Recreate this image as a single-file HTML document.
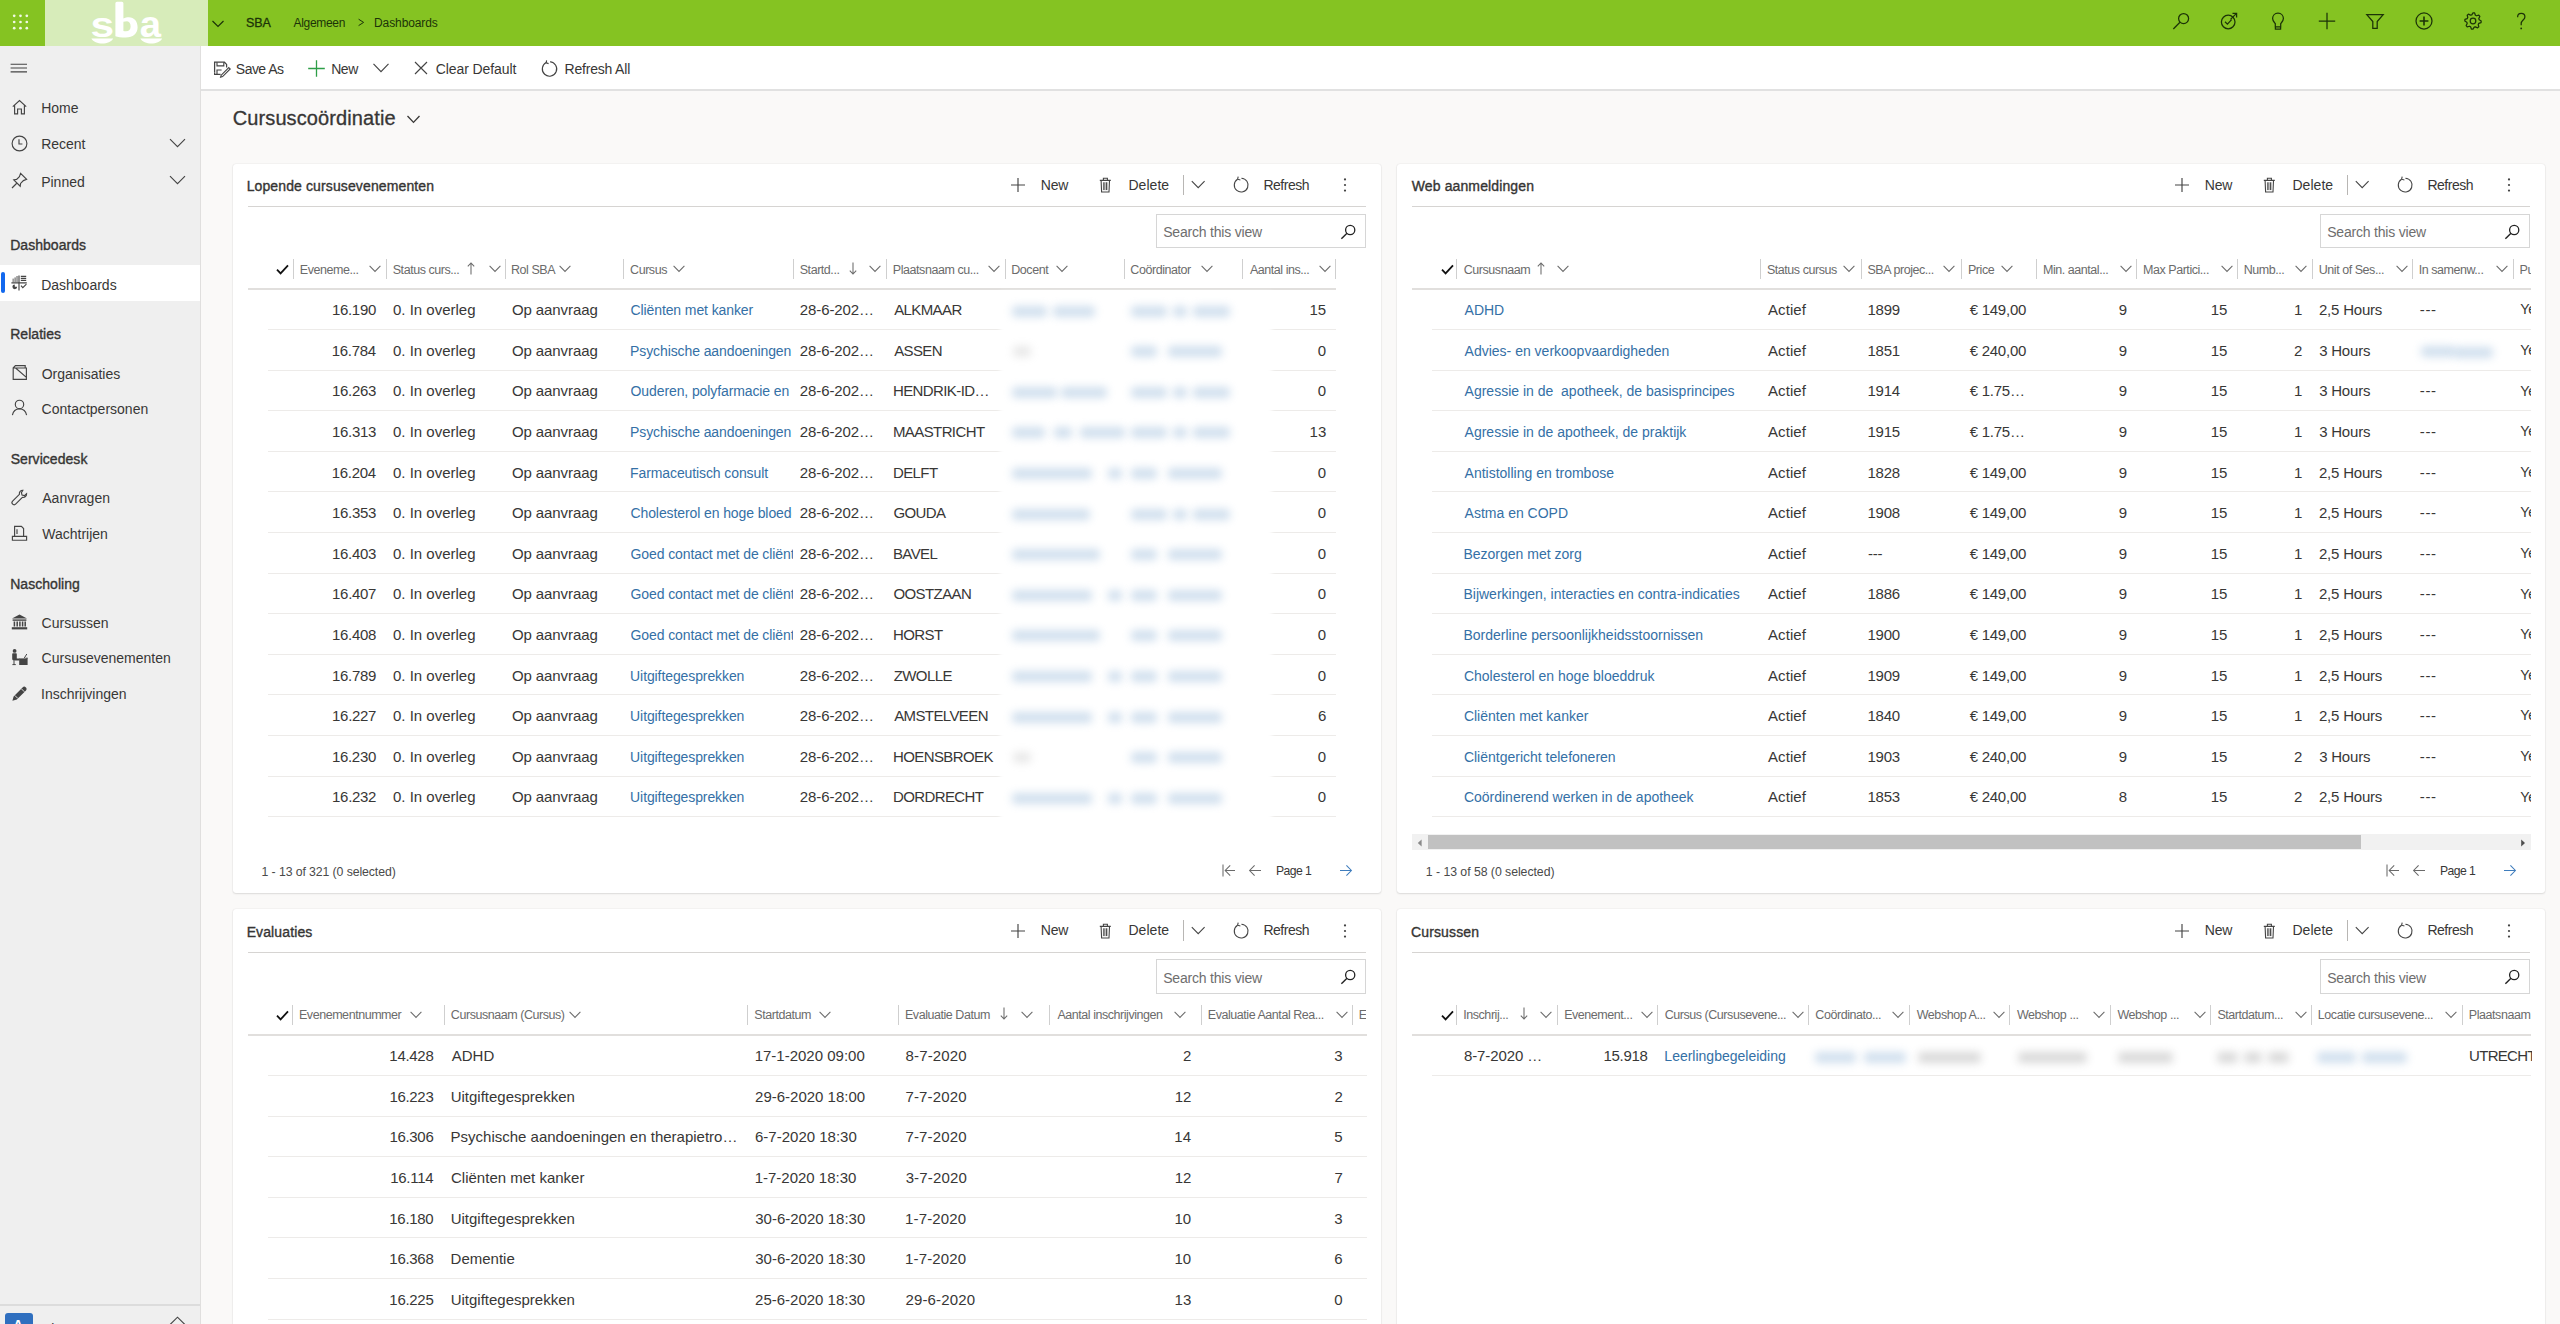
<!DOCTYPE html><html><head><meta charset="utf-8"><title>Cursuscoördinatie</title><style>
html,body{margin:0;padding:0;}
body{width:2560px;height:1324px;overflow:hidden;position:relative;background:#faf9f8;font-family:"Liberation Sans", sans-serif;}
.t{position:absolute;white-space:pre;}
.blur{filter:blur(4px);}
svg{position:absolute;}
</style></head><body>
<div style="position:absolute;left:0px;top:0px;width:2560px;height:46px;background:#85c322;"></div>
<div style="position:absolute;left:45px;top:0px;width:163px;height:46px;background:#d7ecba;"></div>
<svg style="position:absolute;left:0px;top:0px;overflow:visible;" width="45" height="46" viewBox="0 0 45 46" fill="none"><circle cx="14.2" cy="15.8" r="1.35" fill="#f0f9e4"/><circle cx="20.5" cy="15.8" r="1.35" fill="#f0f9e4"/><circle cx="26.8" cy="15.8" r="1.35" fill="#f0f9e4"/><circle cx="14.2" cy="22" r="1.35" fill="#f0f9e4"/><circle cx="20.5" cy="22" r="1.35" fill="#f0f9e4"/><circle cx="26.8" cy="22" r="1.35" fill="#f0f9e4"/><circle cx="14.2" cy="28.2" r="1.35" fill="#f0f9e4"/><circle cx="20.5" cy="28.2" r="1.35" fill="#f0f9e4"/><circle cx="26.8" cy="28.2" r="1.35" fill="#f0f9e4"/></svg>
<svg style="position:absolute;left:0px;top:0px;overflow:visible;" width="208" height="46" viewBox="0 0 208 46" fill="none"><text transform="translate(90.41 36.75) scale(0.425 0.352)" font-family="Liberation Sans" font-weight="700" font-size="100" fill="#fff">s</text><text transform="translate(139.78 36.94) scale(0.3827 0.363)" font-family="Liberation Sans" font-weight="700" font-size="100" fill="#fff">a</text><path fill="#fff" fill-rule="evenodd" d="M115.4 3.2 Q115.4 1.7 116.9 1.7 H121.9 Q123.4 1.7 123.4 3.2 V18.6 C125 17.8 127 17.3 128.8 17.3 C134.2 17.3 137.6 21.6 137.6 27.3 C137.6 33.6 133 37.6 125.8 37.6 C121.2 37.6 117.6 37 115.4 36.2 Z M123.4 21.8 V30.9 C124.2 31.1 125.1 31.2 126 31.2 C129 31.2 130.6 29.6 130.6 26.4 C130.6 23.3 129.2 21.2 127.1 21.2 C125.7 21.2 124.5 21.4 123.4 21.8 Z"/><path fill="#fff" d="M91.4 38.4 L113.2 38.4 C111.4 41.6 107 43.4 102.3 43.4 C97.6 43.4 93.2 41.6 91.4 38.4 Z"/><path fill="#fff" d="M140.4 38.4 L162.2 38.4 C160.4 41.6 156 43.4 151.3 43.4 C146.6 43.4 142.2 41.6 140.4 38.4 Z"/></svg>
<svg style="position:absolute;left:211px;top:19px;overflow:visible;" width="14" height="10" viewBox="0 0 14 10" fill="none"><path d="M1.5 2 L7 7.5 L12.5 2" stroke="#1c3308" stroke-width="1.2"/></svg>
<div class="t" style="top:14.59px;font-size:12.5px;line-height:17.5px;height:17.5px;color:#1c3308;letter-spacing:-0.1px;left:245.93px;-webkit-text-stroke:0.3px #1c3308;">SBA</div>
<div class="t" style="top:14.94px;font-size:12px;line-height:16.8px;height:16.8px;color:#1c3308;letter-spacing:-0.3px;left:293.48px;">Algemeen</div>
<svg style="position:absolute;left:356px;top:18px;overflow:visible;" width="10" height="10" viewBox="0 0 10 10" fill="none"><path d="M2.6 1.2 L7.6 4.4 L2.6 7.6" stroke="#1c3308" stroke-width="1.0"/></svg>
<div class="t" style="top:14.94px;font-size:12px;line-height:16.8px;height:16.8px;color:#1c3308;letter-spacing:-0.1px;left:374.02px;">Dashboards</div>
<svg style="position:absolute;left:2170.6px;top:11px;overflow:visible;" width="20" height="20" viewBox="0 0 20 20" fill="none"><circle cx="12.6" cy="7.6" r="5" stroke="#1c3308" stroke-width="1.25"/><path d="M9 11.2 L2.3 18" stroke="#1c3308" stroke-width="1.25"/></svg>
<svg style="position:absolute;left:2219.2px;top:11px;overflow:visible;" width="20" height="20" viewBox="0 0 20 20" fill="none"><circle cx="9.2" cy="11" r="6.8" stroke="#1c3308" stroke-width="1.25"/><path d="M6 10.8 L8.4 13.2 L12.6 8.6" stroke="#1c3308" stroke-width="1.25"/><path d="M11.5 8.4 L17.5 2.4 M13.5 2.3 H17.6 V6.4" stroke="#1c3308" stroke-width="1.25"/></svg>
<svg style="position:absolute;left:2267.5px;top:11px;overflow:visible;" width="20" height="20" viewBox="0 0 20 20" fill="none"><path d="M10 2.2 C6.6 2.2 4.6 4.7 4.6 7.6 C4.6 10 6.2 11.3 7.3 12.6 V15.8 H12.7 V12.6 C13.8 11.3 15.4 10 15.4 7.6 C15.4 4.7 13.4 2.2 10 2.2 Z M7.4 15.8 V18.2 H12.6 V15.8" stroke="#1c3308" stroke-width="1.25"/></svg>
<svg style="position:absolute;left:2316.6px;top:11px;overflow:visible;" width="20" height="20" viewBox="0 0 20 20" fill="none"><path d="M10 1.8 V18.2 M1.8 10 H18.2" stroke="#1c3308" stroke-width="1.25"/></svg>
<svg style="position:absolute;left:2365.2px;top:11px;overflow:visible;" width="20" height="20" viewBox="0 0 20 20" fill="none"><path d="M1.8 3.6 H18.2 L12.2 10.6 V17.4 H7.8 V10.6 Z" stroke="#1c3308" stroke-width="1.25"/></svg>
<svg style="position:absolute;left:2414px;top:11px;overflow:visible;" width="20" height="20" viewBox="0 0 20 20" fill="none"><circle cx="10" cy="10" r="8" stroke="#1c3308" stroke-width="1.25"/><path d="M10 5.6 V14.4 M5.6 10 H14.4" stroke="#1c3308" stroke-width="1.6"/></svg>
<svg style="position:absolute;left:2462.9px;top:11px;overflow:visible;" width="20" height="20" viewBox="0 0 20 20" fill="none"><path d="M18.20 10.00 L18.04 11.60 L15.82 12.41 L15.24 13.50 L15.80 15.80 L14.56 16.82 L12.41 15.82 L11.23 16.18 L10.00 18.20 L8.40 18.04 L7.59 15.82 L6.50 15.24 L4.20 15.80 L3.18 14.56 L4.18 12.41 L3.82 11.23 L1.80 10.00 L1.96 8.40 L4.18 7.59 L4.76 6.50 L4.20 4.20 L5.44 3.18 L7.59 4.18 L8.77 3.82 L10.00 1.80 L11.60 1.96 L12.41 4.18 L13.50 4.76 L15.80 4.20 L16.82 5.44 L15.82 7.59 L16.18 8.77 Z" stroke="#1c3308" stroke-width="1.25" stroke-linejoin="round"/><circle cx="10" cy="10" r="2.8" stroke="#1c3308" stroke-width="1.25"/></svg>
<svg style="position:absolute;left:2511px;top:11px;overflow:visible;" width="20" height="20" viewBox="0 0 20 20" fill="none"><path d="M6.6 6.2 C6.6 4 8.2 2.4 10.3 2.4 C12.4 2.4 13.9 3.9 13.9 5.9 C13.9 8.9 10.2 9.2 10.2 12.6 V14.2" stroke="#1c3308" stroke-width="1.25"/><circle cx="10.2" cy="17.4" r="0.9" fill="#1c3308"/></svg>
<div style="position:absolute;left:201px;top:46px;width:2359px;height:44px;background:#ffffff;"></div>
<div style="position:absolute;left:201px;top:89px;width:2359px;height:1.5px;background:#e1e1e1;"></div>
<svg style="position:absolute;left:213px;top:60px;overflow:visible;" width="18" height="18" viewBox="0 0 18 18" fill="none"><path d="M1.6 12.6 V2.2 H11.4 L13.6 4.4 V7.6" stroke="#444444" stroke-width="1.25"/><path d="M4 2.2 V5.8 H10.8 V2.2" stroke="#444444" stroke-width="1.15"/><path d="M1.6 12.6 V14.4 H7.6" stroke="#444444" stroke-width="1.15"/><path d="M4 14.4 V10 H8.6" stroke="#444444" stroke-width="1.15"/><path d="M15.8 7.6 L17.2 9 L9.6 16.6 L7.6 17.2 L8.2 15.2 Z" stroke="#444444" stroke-width="1.15"/></svg>
<div class="t" style="top:60.46px;font-size:14px;line-height:19.6px;height:19.6px;color:#383736;letter-spacing:-0.55px;left:235.86px;">Save As</div>
<svg style="position:absolute;left:307px;top:59px;overflow:visible;" width="19" height="19" viewBox="0 0 19 19" fill="none"><path d="M9.5 1.2 V17.8 M1.2 9.5 H17.8" stroke="#2e9e48" stroke-width="1.3"/></svg>
<div class="t" style="top:60.46px;font-size:14px;line-height:19.6px;height:19.6px;color:#383736;letter-spacing:-0.4px;left:331.15px;">New</div>
<svg style="position:absolute;left:372px;top:62px;overflow:visible;" width="18" height="12" viewBox="0 0 18 12" fill="none"><path d="M1.5 1.8 L9 9.6 L16.5 1.8" stroke="#444444" stroke-width="1.15"/></svg>
<svg style="position:absolute;left:414px;top:61px;overflow:visible;" width="14" height="14" viewBox="0 0 14 14" fill="none"><path d="M1 1 L13 13 M13 1 L1 13" stroke="#444444" stroke-width="1.15"/></svg>
<div class="t" style="top:60.46px;font-size:14px;line-height:19.6px;height:19.6px;color:#383736;letter-spacing:-0.1px;left:435.79px;">Clear Default</div>
<svg style="position:absolute;left:541px;top:60px;overflow:visible;" width="18" height="18" viewBox="0 0 18 18" fill="none"><path d="M5.2 2.6 A7.2 7.2 0 1 0 9 1.8" stroke="#444444" stroke-width="1.15"/><path d="M5.6 0.4 L5.2 2.8 L7.6 3.6" stroke="#444444" stroke-width="1.15"/></svg>
<div class="t" style="top:60.46px;font-size:14px;line-height:19.6px;height:19.6px;color:#383736;letter-spacing:-0.2px;left:564.55px;">Refresh All</div>
<div style="position:absolute;left:0px;top:46px;width:200px;height:1278px;background:#efefef;"></div>
<div style="position:absolute;left:200px;top:46px;width:1px;height:1278px;background:#e0dfde;"></div>
<svg style="position:absolute;left:10px;top:63px;overflow:visible;" width="18" height="10" viewBox="0 0 18 10" fill="none"><path d="M0.6 1.2 H17 M0.6 5 H17 M0.6 8.8 H17" stroke="#444444" stroke-width="1.15"/></svg>
<div class="t" style="top:99.16px;font-size:14px;line-height:19.6px;height:19.6px;color:#383736;left:41.15px;">Home</div>
<svg style="position:absolute;left:11px;top:99px;overflow:visible;" width="17" height="17" viewBox="0 0 17 17" fill="none"><path d="M1.8 7.6 L8.5 1.6 L15.2 7.6 M3.6 6 V14.8 H6.6 V10 H10.4 V14.8 H13.4 V6" stroke="#444444" stroke-width="1.15"/></svg>
<div class="t" style="top:135.16px;font-size:14px;line-height:19.6px;height:19.6px;color:#383736;left:41.15px;">Recent</div>
<svg style="position:absolute;left:11px;top:134.5px;overflow:visible;" width="17" height="17" viewBox="0 0 17 17" fill="none"><circle cx="8.5" cy="8.5" r="7.4" stroke="#444444" stroke-width="1.15"/><path d="M8 4.2 V9 H11.4" stroke="#444444" stroke-width="1.15"/></svg>
<svg style="position:absolute;left:169px;top:138px;overflow:visible;" width="17" height="10" viewBox="0 0 17 10" fill="none"><path d="M1 1.2 L8.5 8.6 L16 1.2" stroke="#444444" stroke-width="1.15"/></svg>
<div class="t" style="top:172.66px;font-size:14px;line-height:19.6px;height:19.6px;color:#383736;left:41.15px;">Pinned</div>
<svg style="position:absolute;left:11px;top:172px;overflow:visible;" width="17" height="17" viewBox="0 0 17 17" fill="none"><path d="M1 16 L6 11 M9.6 1.4 L15.6 7.4 L12.4 8.6 L9.6 11.4 L9.2 14.2 L2.8 7.8 L5.6 7.4 L8.4 4.6 Z" stroke="#444444" stroke-width="1.15"/></svg>
<svg style="position:absolute;left:169px;top:175px;overflow:visible;" width="17" height="10" viewBox="0 0 17 10" fill="none"><path d="M1 1.2 L8.5 8.6 L16 1.2" stroke="#444444" stroke-width="1.15"/></svg>
<div class="t" style="top:235.66px;font-size:14px;line-height:19.6px;height:19.6px;color:#383736;letter-spacing:0.05px;left:10.15px;-webkit-text-stroke:0.35px #323130;">Dashboards</div>
<div style="position:absolute;left:0px;top:264.5px;width:200px;height:36.5px;background:#ffffff;"></div>
<div style="position:absolute;left:0.8px;top:272px;width:3.8px;height:21px;background:#1268ee;border-radius:2px;"></div>
<svg style="position:absolute;left:11px;top:274.5px;overflow:visible;" width="17" height="17" viewBox="0 0 17 17" fill="none"><rect x="1.4" y="3.6" width="1.7" height="3.6" fill="#9a9a9a"/><rect x="3.3" y="2.4" width="1.7" height="4.8" fill="#9a9a9a"/><rect x="5.2" y="1.0" width="1.7" height="6.2" fill="#9a9a9a"/><path d="M0.4 7.8 H15.8 M8 0.6 V15.4 M9.8 1.4 H15.2 M9.8 3.4 H15.2 M9.8 5.4 H15.2" stroke="#444444" stroke-width="1.15"/><path d="M3.8 9.4 A2.4 2.4 0 1 0 6.2 11.8 H3.8 Z" fill="#444444"/><path d="M10 10.6 L11.8 12.6 L15.4 9.2" stroke="#444444" stroke-width="1.15"/></svg>
<div class="t" style="top:275.66px;font-size:14px;line-height:19.6px;height:19.6px;color:#383736;left:41.15px;">Dashboards</div>
<div class="t" style="top:324.66px;font-size:14px;line-height:19.6px;height:19.6px;color:#383736;letter-spacing:0.05px;left:10.15px;-webkit-text-stroke:0.35px #323130;">Relaties</div>
<svg style="position:absolute;left:11px;top:364px;overflow:visible;" width="17" height="17" viewBox="0 0 17 17" fill="none"><path d="M2.2 4 V15.4 H15.4 V4 Z M2.2 4 L4.4 1.6 H14.2 V4 M4.6 4 L15.4 13.4" stroke="#444444" stroke-width="1.15"/></svg>
<div class="t" style="top:364.66px;font-size:14px;line-height:19.6px;height:19.6px;color:#383736;left:41.64px;">Organisaties</div>
<svg style="position:absolute;left:11px;top:399px;overflow:visible;" width="17" height="17" viewBox="0 0 17 17" fill="none"><circle cx="8.5" cy="5.4" r="4.2" stroke="#444444" stroke-width="1.15"/><path d="M1.4 16.2 C2.2 11.8 5 9.8 8.5 9.8 C12 9.8 14.8 11.8 15.6 16.2" stroke="#444444" stroke-width="1.15"/></svg>
<div class="t" style="top:399.66px;font-size:14px;line-height:19.6px;height:19.6px;color:#383736;left:41.59px;">Contactpersonen</div>
<div class="t" style="top:449.66px;font-size:14px;line-height:19.6px;height:19.6px;color:#383736;letter-spacing:0.05px;left:10.66px;-webkit-text-stroke:0.35px #323130;">Servicedesk</div>
<svg style="position:absolute;left:11px;top:488.5px;overflow:visible;" width="17" height="17" viewBox="0 0 17 17" fill="none"><path d="M11.8 1.2 C9.6 1.2 8 3 8.4 5.4 L1.6 12.2 C0.8 13 0.8 14.4 1.6 15.2 C2.4 16 3.8 16 4.6 15.2 L11.4 8.4 C13.8 8.8 15.8 7 15.6 4.6 L13.4 6.6 L11 6 L10.4 3.6 Z" stroke="#444444" stroke-width="1.15"/></svg>
<div class="t" style="top:489.16px;font-size:14px;line-height:19.6px;height:19.6px;color:#383736;left:42.27px;">Aanvragen</div>
<svg style="position:absolute;left:11px;top:525px;overflow:visible;" width="17" height="17" viewBox="0 0 17 17" fill="none"><path d="M3.6 11.4 V1.4 H10.4 L12.6 3.6 V11.4 M1.4 11.4 H15.6 V15.2 H1.4 Z M6 4.2 V9" stroke="#444444" stroke-width="1.15"/></svg>
<div class="t" style="top:525.16px;font-size:14px;line-height:19.6px;height:19.6px;color:#383736;left:42.24px;">Wachtrijen</div>
<div class="t" style="top:574.66px;font-size:14px;line-height:19.6px;height:19.6px;color:#383736;letter-spacing:0.05px;left:10.15px;-webkit-text-stroke:0.35px #323130;">Nascholing</div>
<svg style="position:absolute;left:11px;top:613.5px;overflow:visible;" width="17" height="17" viewBox="0 0 17 17" fill="none"><path d="M8.5 0.6 L16 4.6 H1 Z" fill="#444444"/><rect x="1.6" y="5.4" width="13.8" height="1.4" fill="#444444"/><path d="M3.4 7.6 V12.6 M6.2 7.6 V12.6 M8.9 7.6 V12.6 M11.6 7.6 V12.6 M14.2 7.6 V12.6" stroke="#444444" stroke-width="1.5"/><rect x="0.8" y="13.2" width="15.4" height="2.2" fill="#444444"/></svg>
<div class="t" style="top:614.16px;font-size:14px;line-height:19.6px;height:19.6px;color:#383736;left:41.59px;">Cursussen</div>
<svg style="position:absolute;left:11px;top:649px;overflow:visible;" width="17" height="17" viewBox="0 0 17 17" fill="none"><circle cx="3.6" cy="1.9" r="1.9" fill="#444444"/><path d="M1.2 5 Q1.2 4.2 2 4.2 H5 Q5.8 4.2 5.8 5 V9.4 H8.6 V11.4 H2.6 Q1.2 11.4 1.2 10 Z" fill="#444444"/><path d="M3 11.4 V15.6 M1.4 15.6 H4.8" stroke="#444444" stroke-width="1"/><rect x="8.2" y="9.4" width="8.4" height="6.6" fill="#444444"/><path d="M13.2 9.2 L15.8 5 M14.6 9.2 H16.8" stroke="#444444" stroke-width="1"/></svg>
<div class="t" style="top:649.16px;font-size:14px;line-height:19.6px;height:19.6px;color:#383736;left:41.59px;">Cursusevenementen</div>
<svg style="position:absolute;left:11px;top:685px;overflow:visible;" width="17" height="17" viewBox="0 0 17 17" fill="none"><path d="M1.4 15.8 L2.6 11.4 L11.8 2.2 C12.6 1.4 13.8 1.4 14.6 2.2 L15 2.6 C15.8 3.4 15.8 4.6 15 5.4 L5.8 14.6 Z" fill="#444444"/><path d="M3.8 10.4 L6.8 13.4 M10.4 3.8 L13.4 6.8" stroke="#efefef" stroke-width="0.9"/></svg>
<div class="t" style="top:685.16px;font-size:14px;line-height:19.6px;height:19.6px;color:#383736;left:41.01px;">Inschrijvingen</div>
<div style="position:absolute;left:0px;top:1304px;width:200px;height:1.5px;background:#dcdcdc;"></div>
<div style="position:absolute;left:5px;top:1313px;width:28px;height:28px;background:#2f6fbf;border-radius:3px;"></div>
<div class="t" style="top:1316.36px;font-size:14px;line-height:19.6px;height:19.6px;color:#ffffff;font-weight:700;left:12.97px;">A</div>
<div class="t" style="top:1320.36px;font-size:14px;line-height:19.6px;height:19.6px;color:#383736;left:41.97px;">Algemeen</div>
<svg style="position:absolute;left:169px;top:1316px;overflow:visible;" width="17" height="10" viewBox="0 0 17 10" fill="none"><path d="M1 8.6 L8.5 1.2 L16 8.6" stroke="#444444" stroke-width="1.15"/></svg>
<div class="t" style="top:104.23px;font-size:20px;line-height:28.0px;height:28.0px;color:#383736;letter-spacing:0.1px;left:232.78px;-webkit-text-stroke:0.3px #323130;">Cursuscoördinatie</div>
<svg style="position:absolute;left:406px;top:114px;overflow:visible;" width="15" height="11" viewBox="0 0 15 11" fill="none"><path d="M1.5 2 L7.5 8.4 L13.5 2" stroke="#383736" stroke-width="1.3"/></svg>
<div style="position:absolute;left:233px;top:164px;width:1148px;height:729px;background:#fff;border-radius:3px;box-shadow:0 0 1.5px rgba(0,0,0,0.13),0 1px 2px rgba(0,0,0,0.10);"></div>
<div class="t" style="top:177.06px;font-size:14px;line-height:19.6px;height:19.6px;color:#383736;letter-spacing:0.12px;left:246.65px;-webkit-text-stroke:0.35px #323130;">Lopende cursusevenementen</div>
<div style="position:absolute;left:247.5px;top:206px;width:1118.5px;height:1px;background:#d6d4d2;"></div>
<svg style="position:absolute;left:1010px;top:177px;overflow:visible;" width="16" height="16" viewBox="0 0 16 16" fill="none"><path d="M8 1 V15 M1 8 H15" stroke="#444" stroke-width="1.15"/></svg>
<div class="t" style="top:175.66px;font-size:14px;line-height:19.6px;height:19.6px;color:#383736;letter-spacing:-0.3px;left:1040.85px;">New</div>
<svg style="position:absolute;left:1098.5px;top:177px;overflow:visible;" width="13" height="16" viewBox="0 0 13 16" fill="none"><path d="M0.8 3.4 H11.8 M4.4 3.2 V1.2 H8.4 V3.2 M2.1 3.4 L2.6 15 H10 L10.5 3.4" stroke="#444" stroke-width="1.1"/><rect x="3.9" y="5.2" width="4.8" height="8" fill="#bdbdbd"/><path d="M4.9 5.4 V13 M7.6 5.4 V13" stroke="#444" stroke-width="1"/></svg>
<div class="t" style="top:175.66px;font-size:14px;line-height:19.6px;height:19.6px;color:#383736;letter-spacing:0.05px;left:1128.45px;">Delete</div>
<div style="position:absolute;left:1183.2px;top:174.7px;width:1px;height:20.6px;background:#b8b6b4;"></div>
<svg style="position:absolute;left:1191px;top:180px;overflow:visible;" width="15" height="9" viewBox="0 0 15 9" fill="none"><path d="M0.8 1.2 L7.2 7.6 L13.6 1.2" stroke="#444" stroke-width="1.1"/></svg>
<svg style="position:absolute;left:1232.5px;top:177px;overflow:visible;" width="16" height="16" viewBox="0 0 16 16" fill="none"><path d="M4.6 2.2 A6.9 6.9 0 1 0 8.4 1.2" stroke="#444" stroke-width="1.1"/><path d="M5.2 -0.4 L4.6 2.2 L7.4 3" stroke="#444" stroke-width="1.1"/></svg>
<div class="t" style="top:175.66px;font-size:14px;line-height:19.6px;height:19.6px;color:#383736;letter-spacing:-0.5px;left:1263.45px;">Refresh</div>
<svg style="position:absolute;left:1343px;top:178px;overflow:visible;" width="4" height="14" viewBox="0 0 4 14" fill="none"><circle cx="2" cy="1.4" r="1.1" fill="#444"/><circle cx="2" cy="7" r="1.1" fill="#444"/><circle cx="2" cy="12.6" r="1.1" fill="#444"/></svg>
<div style="position:absolute;left:1156.3px;top:213.7px;width:207.5px;height:32.5px;border:1.4px solid #d6d6d6;background:#fff;"></div>
<div class="t" style="top:223.26px;font-size:14px;line-height:19.6px;height:19.6px;color:#6e6e6e;letter-spacing:-0.2px;left:1163.16px;">Search this view</div>
<svg style="position:absolute;left:1340px;top:223.5px;overflow:visible;" width="16" height="16" viewBox="0 0 16 16" fill="none"><circle cx="10.2" cy="6" r="4.6" stroke="#222" stroke-width="1.3"/><path d="M7 9.2 L1.4 14.8" stroke="#222" stroke-width="1.4"/></svg>
<svg style="position:absolute;left:275.5px;top:264px;overflow:visible;" width="13" height="11" viewBox="0 0 13 11" fill="none"><path d="M1 5.6 L4.6 9.4 L12 1.4" stroke="#111" stroke-width="1.8"/></svg>
<div style="position:absolute;left:292.7px;top:259px;width:1px;height:20.3px;background:#cfcfcf;"></div>
<div class="t" style="top:261.69px;font-size:12.5px;line-height:17.5px;height:17.5px;color:#6b6b6b;letter-spacing:-0.45px;left:299.87px;">Eveneme...</div>
<svg style="position:absolute;left:369.4px;top:265.4px;overflow:visible;" width="12" height="7.5" viewBox="0 0 12 7.5" fill="none"><path d="M0.6 0.8 L6 6.4 L11.4 0.8" stroke="#6b6b6b" stroke-width="1.05"/></svg>
<div style="position:absolute;left:386px;top:259px;width:1px;height:20.3px;background:#cfcfcf;"></div>
<div class="t" style="top:261.69px;font-size:12.5px;line-height:17.5px;height:17.5px;color:#6b6b6b;letter-spacing:-0.45px;left:392.73px;">Status curs...</div>
<svg style="position:absolute;left:467.2px;top:261.8px;overflow:visible;" width="8" height="13" viewBox="0 0 8 13" fill="none"><path d="M4 1 V12.6 M0.8 4.4 L4 1 L7.2 4.4" stroke="#6b6b6b" stroke-width="1.05"/></svg>
<svg style="position:absolute;left:488.7px;top:265.4px;overflow:visible;" width="12" height="7.5" viewBox="0 0 12 7.5" fill="none"><path d="M0.6 0.8 L6 6.4 L11.4 0.8" stroke="#6b6b6b" stroke-width="1.05"/></svg>
<div style="position:absolute;left:504.7px;top:259px;width:1px;height:20.3px;background:#cfcfcf;"></div>
<div class="t" style="top:261.69px;font-size:12.5px;line-height:17.5px;height:17.5px;color:#6b6b6b;letter-spacing:-0.45px;left:510.97px;">Rol SBA</div>
<svg style="position:absolute;left:559.3000000000001px;top:265.4px;overflow:visible;" width="12" height="7.5" viewBox="0 0 12 7.5" fill="none"><path d="M0.6 0.8 L6 6.4 L11.4 0.8" stroke="#6b6b6b" stroke-width="1.05"/></svg>
<div style="position:absolute;left:623.3px;top:259px;width:1px;height:20.3px;background:#cfcfcf;"></div>
<div class="t" style="top:261.69px;font-size:12.5px;line-height:17.5px;height:17.5px;color:#6b6b6b;letter-spacing:-0.45px;left:630.07px;">Cursus</div>
<svg style="position:absolute;left:673.2px;top:265.4px;overflow:visible;" width="12" height="7.5" viewBox="0 0 12 7.5" fill="none"><path d="M0.6 0.8 L6 6.4 L11.4 0.8" stroke="#6b6b6b" stroke-width="1.05"/></svg>
<div style="position:absolute;left:792.6px;top:259px;width:1px;height:20.3px;background:#cfcfcf;"></div>
<div class="t" style="top:261.69px;font-size:12.5px;line-height:17.5px;height:17.5px;color:#6b6b6b;letter-spacing:-0.45px;left:799.73px;">Startd...</div>
<svg style="position:absolute;left:849.2px;top:261.7px;overflow:visible;" width="8" height="13" viewBox="0 0 8 13" fill="none"><path d="M4 0.4 V12 M0.8 8.6 L4 12 L7.2 8.6" stroke="#6b6b6b" stroke-width="1.05"/></svg>
<svg style="position:absolute;left:868.7px;top:265.4px;overflow:visible;" width="12" height="7.5" viewBox="0 0 12 7.5" fill="none"><path d="M0.6 0.8 L6 6.4 L11.4 0.8" stroke="#6b6b6b" stroke-width="1.05"/></svg>
<div style="position:absolute;left:886px;top:259px;width:1px;height:20.3px;background:#cfcfcf;"></div>
<div class="t" style="top:261.69px;font-size:12.5px;line-height:17.5px;height:17.5px;color:#6b6b6b;letter-spacing:-0.45px;left:892.87px;">Plaatsnaam cu...</div>
<svg style="position:absolute;left:988.2px;top:265.4px;overflow:visible;" width="12" height="7.5" viewBox="0 0 12 7.5" fill="none"><path d="M0.6 0.8 L6 6.4 L11.4 0.8" stroke="#6b6b6b" stroke-width="1.05"/></svg>
<div style="position:absolute;left:1004.7px;top:259px;width:1px;height:20.3px;background:#cfcfcf;"></div>
<div class="t" style="top:261.69px;font-size:12.5px;line-height:17.5px;height:17.5px;color:#6b6b6b;letter-spacing:-0.45px;left:1011.27px;">Docent</div>
<svg style="position:absolute;left:1055.7px;top:265.4px;overflow:visible;" width="12" height="7.5" viewBox="0 0 12 7.5" fill="none"><path d="M0.6 0.8 L6 6.4 L11.4 0.8" stroke="#6b6b6b" stroke-width="1.05"/></svg>
<div style="position:absolute;left:1123.8px;top:259px;width:1px;height:20.3px;background:#cfcfcf;"></div>
<div class="t" style="top:261.69px;font-size:12.5px;line-height:17.5px;height:17.5px;color:#6b6b6b;letter-spacing:-0.45px;left:1130.37px;">Coördinator</div>
<svg style="position:absolute;left:1200.7px;top:265.4px;overflow:visible;" width="12" height="7.5" viewBox="0 0 12 7.5" fill="none"><path d="M0.6 0.8 L6 6.4 L11.4 0.8" stroke="#6b6b6b" stroke-width="1.05"/></svg>
<div style="position:absolute;left:1242px;top:259px;width:1px;height:20.3px;background:#cfcfcf;"></div>
<div class="t" style="top:261.69px;font-size:12.5px;line-height:17.5px;height:17.5px;color:#6b6b6b;letter-spacing:-0.45px;left:1249.88px;">Aantal ins...</div>
<svg style="position:absolute;left:1319.4px;top:265.4px;overflow:visible;" width="12" height="7.5" viewBox="0 0 12 7.5" fill="none"><path d="M0.6 0.8 L6 6.4 L11.4 0.8" stroke="#6b6b6b" stroke-width="1.05"/></svg>
<div style="position:absolute;left:1335px;top:259px;width:1px;height:20.3px;background:#cfcfcf;"></div>
<div style="position:absolute;left:247.5px;top:288px;width:1088.5px;height:2px;background:#e1dfdd;"></div>
<div class="t" style="top:299.27px;font-size:15px;line-height:21.0px;height:21.0px;color:#383736;letter-spacing:-0.3px;left:-224.01px;width:600px;text-align:right;">16.190</div>
<div class="t" style="top:299.27px;font-size:15px;line-height:21.0px;height:21.0px;color:#383736;left:393.01px;">0. In overleg</div>
<div class="t" style="top:299.27px;font-size:15px;line-height:21.0px;height:21.0px;color:#383736;letter-spacing:-0.08px;left:511.89px;">Op aanvraag</div>
<div class="t" style="top:301.26px;font-size:14px;line-height:19.6px;height:19.6px;color:#3470a6;letter-spacing:-0.1px;left:630.49px;width:162.01px;overflow:hidden;">Cliënten met kanker</div>
<div class="t" style="top:299.27px;font-size:15px;line-height:21.0px;height:21.0px;color:#383736;letter-spacing:-0.1px;left:799.85px;">28-6-202…</div>
<div class="t" style="top:299.27px;font-size:15px;line-height:21.0px;height:21.0px;color:#383736;letter-spacing:-0.6px;left:894.17px;">ALKMAAR</div>
<div class="t" style="top:299.27px;font-size:15px;line-height:21.0px;height:21.0px;color:#383736;left:726.23px;width:600px;text-align:right;">15</div>
<div style="position:absolute;left:268px;top:329.0px;width:1068px;height:1px;background:#edebe9;"></div>
<div class="t" style="top:339.87px;font-size:15px;line-height:21.0px;height:21.0px;color:#383736;letter-spacing:-0.3px;left:-224.16px;width:600px;text-align:right;">16.784</div>
<div class="t" style="top:339.87px;font-size:15px;line-height:21.0px;height:21.0px;color:#383736;left:393.01px;">0. In overleg</div>
<div class="t" style="top:339.87px;font-size:15px;line-height:21.0px;height:21.0px;color:#383736;letter-spacing:-0.08px;left:511.89px;">Op aanvraag</div>
<div class="t" style="top:341.86px;font-size:14px;line-height:19.6px;height:19.6px;color:#3470a6;letter-spacing:-0.1px;left:630.05px;width:162.45px;overflow:hidden;">Psychische aandoeningen</div>
<div class="t" style="top:339.87px;font-size:15px;line-height:21.0px;height:21.0px;color:#383736;letter-spacing:-0.1px;left:799.85px;">28-6-202…</div>
<div class="t" style="top:339.87px;font-size:15px;line-height:21.0px;height:21.0px;color:#383736;letter-spacing:-0.6px;left:894.17px;">ASSEN</div>
<div class="t" style="top:339.87px;font-size:15px;line-height:21.0px;height:21.0px;color:#383736;left:726.19px;width:600px;text-align:right;">0</div>
<div style="position:absolute;left:268px;top:369.6px;width:1068px;height:1px;background:#edebe9;"></div>
<div class="t" style="top:380.47px;font-size:15px;line-height:21.0px;height:21.0px;color:#383736;letter-spacing:-0.3px;left:-223.94px;width:600px;text-align:right;">16.263</div>
<div class="t" style="top:380.47px;font-size:15px;line-height:21.0px;height:21.0px;color:#383736;left:393.01px;">0. In overleg</div>
<div class="t" style="top:380.47px;font-size:15px;line-height:21.0px;height:21.0px;color:#383736;letter-spacing:-0.08px;left:511.89px;">Op aanvraag</div>
<div class="t" style="top:382.46px;font-size:14px;line-height:19.6px;height:19.6px;color:#3470a6;letter-spacing:-0.1px;left:630.54px;width:161.96px;overflow:hidden;">Ouderen, polyfarmacie en medicatie</div>
<div class="t" style="top:380.47px;font-size:15px;line-height:21.0px;height:21.0px;color:#383736;letter-spacing:-0.1px;left:799.85px;">28-6-202…</div>
<div class="t" style="top:380.47px;font-size:15px;line-height:21.0px;height:21.0px;color:#383736;letter-spacing:-0.6px;left:892.97px;">HENDRIK-ID…</div>
<div class="t" style="top:380.47px;font-size:15px;line-height:21.0px;height:21.0px;color:#383736;left:726.19px;width:600px;text-align:right;">0</div>
<div style="position:absolute;left:268px;top:410.2px;width:1068px;height:1px;background:#edebe9;"></div>
<div class="t" style="top:421.07px;font-size:15px;line-height:21.0px;height:21.0px;color:#383736;letter-spacing:-0.3px;left:-223.94px;width:600px;text-align:right;">16.313</div>
<div class="t" style="top:421.07px;font-size:15px;line-height:21.0px;height:21.0px;color:#383736;left:393.01px;">0. In overleg</div>
<div class="t" style="top:421.07px;font-size:15px;line-height:21.0px;height:21.0px;color:#383736;letter-spacing:-0.08px;left:511.89px;">Op aanvraag</div>
<div class="t" style="top:423.06px;font-size:14px;line-height:19.6px;height:19.6px;color:#3470a6;letter-spacing:-0.1px;left:630.05px;width:162.45px;overflow:hidden;">Psychische aandoeningen</div>
<div class="t" style="top:421.07px;font-size:15px;line-height:21.0px;height:21.0px;color:#383736;letter-spacing:-0.1px;left:799.85px;">28-6-202…</div>
<div class="t" style="top:421.07px;font-size:15px;line-height:21.0px;height:21.0px;color:#383736;letter-spacing:-0.6px;left:892.97px;">MAASTRICHT</div>
<div class="t" style="top:421.07px;font-size:15px;line-height:21.0px;height:21.0px;color:#383736;left:726.26px;width:600px;text-align:right;">13</div>
<div style="position:absolute;left:268px;top:450.8px;width:1068px;height:1px;background:#edebe9;"></div>
<div class="t" style="top:461.67px;font-size:15px;line-height:21.0px;height:21.0px;color:#383736;letter-spacing:-0.3px;left:-224.16px;width:600px;text-align:right;">16.204</div>
<div class="t" style="top:461.67px;font-size:15px;line-height:21.0px;height:21.0px;color:#383736;left:393.01px;">0. In overleg</div>
<div class="t" style="top:461.67px;font-size:15px;line-height:21.0px;height:21.0px;color:#383736;letter-spacing:-0.08px;left:511.89px;">Op aanvraag</div>
<div class="t" style="top:463.66px;font-size:14px;line-height:19.6px;height:19.6px;color:#3470a6;letter-spacing:-0.1px;left:630.05px;width:162.45px;overflow:hidden;">Farmaceutisch consult</div>
<div class="t" style="top:461.67px;font-size:15px;line-height:21.0px;height:21.0px;color:#383736;letter-spacing:-0.1px;left:799.85px;">28-6-202…</div>
<div class="t" style="top:461.67px;font-size:15px;line-height:21.0px;height:21.0px;color:#383736;letter-spacing:-0.6px;left:892.97px;">DELFT</div>
<div class="t" style="top:461.67px;font-size:15px;line-height:21.0px;height:21.0px;color:#383736;left:726.19px;width:600px;text-align:right;">0</div>
<div style="position:absolute;left:268px;top:491.4px;width:1068px;height:1px;background:#edebe9;"></div>
<div class="t" style="top:502.27px;font-size:15px;line-height:21.0px;height:21.0px;color:#383736;letter-spacing:-0.3px;left:-223.94px;width:600px;text-align:right;">16.353</div>
<div class="t" style="top:502.27px;font-size:15px;line-height:21.0px;height:21.0px;color:#383736;left:393.01px;">0. In overleg</div>
<div class="t" style="top:502.27px;font-size:15px;line-height:21.0px;height:21.0px;color:#383736;letter-spacing:-0.08px;left:511.89px;">Op aanvraag</div>
<div class="t" style="top:504.26px;font-size:14px;line-height:19.6px;height:19.6px;color:#3470a6;letter-spacing:-0.1px;left:630.49px;width:162.01px;overflow:hidden;">Cholesterol en hoge bloeddruk</div>
<div class="t" style="top:502.27px;font-size:15px;line-height:21.0px;height:21.0px;color:#383736;letter-spacing:-0.1px;left:799.85px;">28-6-202…</div>
<div class="t" style="top:502.27px;font-size:15px;line-height:21.0px;height:21.0px;color:#383736;letter-spacing:-0.6px;left:893.45px;">GOUDA</div>
<div class="t" style="top:502.27px;font-size:15px;line-height:21.0px;height:21.0px;color:#383736;left:726.19px;width:600px;text-align:right;">0</div>
<div style="position:absolute;left:268px;top:532.0px;width:1068px;height:1px;background:#edebe9;"></div>
<div class="t" style="top:542.87px;font-size:15px;line-height:21.0px;height:21.0px;color:#383736;letter-spacing:-0.3px;left:-223.94px;width:600px;text-align:right;">16.403</div>
<div class="t" style="top:542.87px;font-size:15px;line-height:21.0px;height:21.0px;color:#383736;left:393.01px;">0. In overleg</div>
<div class="t" style="top:542.87px;font-size:15px;line-height:21.0px;height:21.0px;color:#383736;letter-spacing:-0.08px;left:511.89px;">Op aanvraag</div>
<div class="t" style="top:544.86px;font-size:14px;line-height:19.6px;height:19.6px;color:#3470a6;letter-spacing:-0.1px;left:630.5px;width:162.0px;overflow:hidden;">Goed contact met de cliënt</div>
<div class="t" style="top:542.87px;font-size:15px;line-height:21.0px;height:21.0px;color:#383736;letter-spacing:-0.1px;left:799.85px;">28-6-202…</div>
<div class="t" style="top:542.87px;font-size:15px;line-height:21.0px;height:21.0px;color:#383736;letter-spacing:-0.6px;left:892.97px;">BAVEL</div>
<div class="t" style="top:542.87px;font-size:15px;line-height:21.0px;height:21.0px;color:#383736;left:726.19px;width:600px;text-align:right;">0</div>
<div style="position:absolute;left:268px;top:572.6px;width:1068px;height:1px;background:#edebe9;"></div>
<div class="t" style="top:583.47px;font-size:15px;line-height:21.0px;height:21.0px;color:#383736;letter-spacing:-0.3px;left:-223.85px;width:600px;text-align:right;">16.407</div>
<div class="t" style="top:583.47px;font-size:15px;line-height:21.0px;height:21.0px;color:#383736;left:393.01px;">0. In overleg</div>
<div class="t" style="top:583.47px;font-size:15px;line-height:21.0px;height:21.0px;color:#383736;letter-spacing:-0.08px;left:511.89px;">Op aanvraag</div>
<div class="t" style="top:585.46px;font-size:14px;line-height:19.6px;height:19.6px;color:#3470a6;letter-spacing:-0.1px;left:630.5px;width:162.0px;overflow:hidden;">Goed contact met de cliënt</div>
<div class="t" style="top:583.47px;font-size:15px;line-height:21.0px;height:21.0px;color:#383736;letter-spacing:-0.1px;left:799.85px;">28-6-202…</div>
<div class="t" style="top:583.47px;font-size:15px;line-height:21.0px;height:21.0px;color:#383736;letter-spacing:-0.6px;left:893.49px;">OOSTZAAN</div>
<div class="t" style="top:583.47px;font-size:15px;line-height:21.0px;height:21.0px;color:#383736;left:726.19px;width:600px;text-align:right;">0</div>
<div style="position:absolute;left:268px;top:613.2px;width:1068px;height:1px;background:#edebe9;"></div>
<div class="t" style="top:624.07px;font-size:15px;line-height:21.0px;height:21.0px;color:#383736;letter-spacing:-0.3px;left:-223.95px;width:600px;text-align:right;">16.408</div>
<div class="t" style="top:624.07px;font-size:15px;line-height:21.0px;height:21.0px;color:#383736;left:393.01px;">0. In overleg</div>
<div class="t" style="top:624.07px;font-size:15px;line-height:21.0px;height:21.0px;color:#383736;letter-spacing:-0.08px;left:511.89px;">Op aanvraag</div>
<div class="t" style="top:626.06px;font-size:14px;line-height:19.6px;height:19.6px;color:#3470a6;letter-spacing:-0.1px;left:630.5px;width:162.0px;overflow:hidden;">Goed contact met de cliënt</div>
<div class="t" style="top:624.07px;font-size:15px;line-height:21.0px;height:21.0px;color:#383736;letter-spacing:-0.1px;left:799.85px;">28-6-202…</div>
<div class="t" style="top:624.07px;font-size:15px;line-height:21.0px;height:21.0px;color:#383736;letter-spacing:-0.6px;left:892.97px;">HORST</div>
<div class="t" style="top:624.07px;font-size:15px;line-height:21.0px;height:21.0px;color:#383736;left:726.19px;width:600px;text-align:right;">0</div>
<div style="position:absolute;left:268px;top:653.8px;width:1068px;height:1px;background:#edebe9;"></div>
<div class="t" style="top:664.67px;font-size:15px;line-height:21.0px;height:21.0px;color:#383736;letter-spacing:-0.3px;left:-223.89px;width:600px;text-align:right;">16.789</div>
<div class="t" style="top:664.67px;font-size:15px;line-height:21.0px;height:21.0px;color:#383736;left:393.01px;">0. In overleg</div>
<div class="t" style="top:664.67px;font-size:15px;line-height:21.0px;height:21.0px;color:#383736;letter-spacing:-0.08px;left:511.89px;">Op aanvraag</div>
<div class="t" style="top:666.66px;font-size:14px;line-height:19.6px;height:19.6px;color:#3470a6;letter-spacing:-0.1px;left:630.12px;width:162.38px;overflow:hidden;">Uitgiftegesprekken</div>
<div class="t" style="top:664.67px;font-size:15px;line-height:21.0px;height:21.0px;color:#383736;letter-spacing:-0.1px;left:799.85px;">28-6-202…</div>
<div class="t" style="top:664.67px;font-size:15px;line-height:21.0px;height:21.0px;color:#383736;letter-spacing:-0.6px;left:893.72px;">ZWOLLE</div>
<div class="t" style="top:664.67px;font-size:15px;line-height:21.0px;height:21.0px;color:#383736;left:726.19px;width:600px;text-align:right;">0</div>
<div style="position:absolute;left:268px;top:694.4000000000001px;width:1068px;height:1px;background:#edebe9;"></div>
<div class="t" style="top:705.27px;font-size:15px;line-height:21.0px;height:21.0px;color:#383736;letter-spacing:-0.3px;left:-223.85px;width:600px;text-align:right;">16.227</div>
<div class="t" style="top:705.27px;font-size:15px;line-height:21.0px;height:21.0px;color:#383736;left:393.01px;">0. In overleg</div>
<div class="t" style="top:705.27px;font-size:15px;line-height:21.0px;height:21.0px;color:#383736;letter-spacing:-0.08px;left:511.89px;">Op aanvraag</div>
<div class="t" style="top:707.26px;font-size:14px;line-height:19.6px;height:19.6px;color:#3470a6;letter-spacing:-0.1px;left:630.12px;width:162.38px;overflow:hidden;">Uitgiftegesprekken</div>
<div class="t" style="top:705.27px;font-size:15px;line-height:21.0px;height:21.0px;color:#383736;letter-spacing:-0.1px;left:799.85px;">28-6-202…</div>
<div class="t" style="top:705.27px;font-size:15px;line-height:21.0px;height:21.0px;color:#383736;letter-spacing:-0.6px;left:894.17px;">AMSTELVEEN</div>
<div class="t" style="top:705.27px;font-size:15px;line-height:21.0px;height:21.0px;color:#383736;left:726.26px;width:600px;text-align:right;">6</div>
<div style="position:absolute;left:268px;top:735.0px;width:1068px;height:1px;background:#edebe9;"></div>
<div class="t" style="top:745.87px;font-size:15px;line-height:21.0px;height:21.0px;color:#383736;letter-spacing:-0.3px;left:-224.01px;width:600px;text-align:right;">16.230</div>
<div class="t" style="top:745.87px;font-size:15px;line-height:21.0px;height:21.0px;color:#383736;left:393.01px;">0. In overleg</div>
<div class="t" style="top:745.87px;font-size:15px;line-height:21.0px;height:21.0px;color:#383736;letter-spacing:-0.08px;left:511.89px;">Op aanvraag</div>
<div class="t" style="top:747.86px;font-size:14px;line-height:19.6px;height:19.6px;color:#3470a6;letter-spacing:-0.1px;left:630.12px;width:162.38px;overflow:hidden;">Uitgiftegesprekken</div>
<div class="t" style="top:745.87px;font-size:15px;line-height:21.0px;height:21.0px;color:#383736;letter-spacing:-0.1px;left:799.85px;">28-6-202…</div>
<div class="t" style="top:745.87px;font-size:15px;line-height:21.0px;height:21.0px;color:#383736;letter-spacing:-0.6px;left:892.97px;">HOENSBROEK</div>
<div class="t" style="top:745.87px;font-size:15px;line-height:21.0px;height:21.0px;color:#383736;left:726.19px;width:600px;text-align:right;">0</div>
<div style="position:absolute;left:268px;top:775.6px;width:1068px;height:1px;background:#edebe9;"></div>
<div class="t" style="top:786.47px;font-size:15px;line-height:21.0px;height:21.0px;color:#383736;letter-spacing:-0.3px;left:-223.85px;width:600px;text-align:right;">16.232</div>
<div class="t" style="top:786.47px;font-size:15px;line-height:21.0px;height:21.0px;color:#383736;left:393.01px;">0. In overleg</div>
<div class="t" style="top:786.47px;font-size:15px;line-height:21.0px;height:21.0px;color:#383736;letter-spacing:-0.08px;left:511.89px;">Op aanvraag</div>
<div class="t" style="top:788.46px;font-size:14px;line-height:19.6px;height:19.6px;color:#3470a6;letter-spacing:-0.1px;left:630.12px;width:162.38px;overflow:hidden;">Uitgiftegesprekken</div>
<div class="t" style="top:786.47px;font-size:15px;line-height:21.0px;height:21.0px;color:#383736;letter-spacing:-0.1px;left:799.85px;">28-6-202…</div>
<div class="t" style="top:786.47px;font-size:15px;line-height:21.0px;height:21.0px;color:#383736;letter-spacing:-0.6px;left:892.97px;">DORDRECHT</div>
<div class="t" style="top:786.47px;font-size:15px;line-height:21.0px;height:21.0px;color:#383736;left:726.19px;width:600px;text-align:right;">0</div>
<div style="position:absolute;left:268px;top:816.2px;width:1068px;height:1px;background:#edebe9;"></div>
<div style="position:absolute;left:1000px;top:292px;width:272px;height:532px;background:#fff;filter:blur(2px);"></div>
<div class="blur" style="position:absolute;left:1012px;top:305.5px;width:35px;height:11px;background:#7fa8d0;opacity:0.36;border-radius:4px;"></div>
<div class="blur" style="position:absolute;left:1053px;top:305.5px;width:42px;height:11px;background:#7fa8d0;opacity:0.36;border-radius:4px;"></div>
<div class="blur" style="position:absolute;left:1131px;top:305.5px;width:36px;height:11px;background:#7fa8d0;opacity:0.36;border-radius:4px;"></div>
<div class="blur" style="position:absolute;left:1173px;top:305.5px;width:14px;height:11px;background:#7fa8d0;opacity:0.36;border-radius:4px;"></div>
<div class="blur" style="position:absolute;left:1193px;top:305.5px;width:37px;height:11px;background:#7fa8d0;opacity:0.36;border-radius:4px;"></div>
<div class="blur" style="position:absolute;left:1013px;top:346.1px;width:18px;height:11px;background:#b0b0b0;opacity:0.28;border-radius:4px;"></div>
<div class="blur" style="position:absolute;left:1131px;top:346.1px;width:26px;height:11px;background:#7fa8d0;opacity:0.36;border-radius:4px;"></div>
<div class="blur" style="position:absolute;left:1168px;top:346.1px;width:54px;height:11px;background:#7fa8d0;opacity:0.36;border-radius:4px;"></div>
<div class="blur" style="position:absolute;left:1012px;top:386.7px;width:45px;height:11px;background:#7fa8d0;opacity:0.36;border-radius:4px;"></div>
<div class="blur" style="position:absolute;left:1061px;top:386.7px;width:46px;height:11px;background:#7fa8d0;opacity:0.36;border-radius:4px;"></div>
<div class="blur" style="position:absolute;left:1131px;top:386.7px;width:36px;height:11px;background:#7fa8d0;opacity:0.36;border-radius:4px;"></div>
<div class="blur" style="position:absolute;left:1173px;top:386.7px;width:14px;height:11px;background:#7fa8d0;opacity:0.36;border-radius:4px;"></div>
<div class="blur" style="position:absolute;left:1193px;top:386.7px;width:37px;height:11px;background:#7fa8d0;opacity:0.36;border-radius:4px;"></div>
<div class="blur" style="position:absolute;left:1012px;top:427.3px;width:33px;height:11px;background:#7fa8d0;opacity:0.36;border-radius:4px;"></div>
<div class="blur" style="position:absolute;left:1054px;top:427.3px;width:18px;height:11px;background:#7fa8d0;opacity:0.36;border-radius:4px;"></div>
<div class="blur" style="position:absolute;left:1080px;top:427.3px;width:45px;height:11px;background:#7fa8d0;opacity:0.36;border-radius:4px;"></div>
<div class="blur" style="position:absolute;left:1131px;top:427.3px;width:36px;height:11px;background:#7fa8d0;opacity:0.36;border-radius:4px;"></div>
<div class="blur" style="position:absolute;left:1173px;top:427.3px;width:14px;height:11px;background:#7fa8d0;opacity:0.36;border-radius:4px;"></div>
<div class="blur" style="position:absolute;left:1193px;top:427.3px;width:37px;height:11px;background:#7fa8d0;opacity:0.36;border-radius:4px;"></div>
<div class="blur" style="position:absolute;left:1012px;top:467.9px;width:80px;height:11px;background:#7fa8d0;opacity:0.36;border-radius:4px;"></div>
<div class="blur" style="position:absolute;left:1108px;top:467.9px;width:14px;height:11px;background:#7fa8d0;opacity:0.36;border-radius:4px;"></div>
<div class="blur" style="position:absolute;left:1131px;top:467.9px;width:26px;height:11px;background:#7fa8d0;opacity:0.36;border-radius:4px;"></div>
<div class="blur" style="position:absolute;left:1168px;top:467.9px;width:54px;height:11px;background:#7fa8d0;opacity:0.36;border-radius:4px;"></div>
<div class="blur" style="position:absolute;left:1012px;top:508.5px;width:78px;height:11px;background:#7fa8d0;opacity:0.36;border-radius:4px;"></div>
<div class="blur" style="position:absolute;left:1131px;top:508.5px;width:36px;height:11px;background:#7fa8d0;opacity:0.36;border-radius:4px;"></div>
<div class="blur" style="position:absolute;left:1173px;top:508.5px;width:14px;height:11px;background:#7fa8d0;opacity:0.36;border-radius:4px;"></div>
<div class="blur" style="position:absolute;left:1193px;top:508.5px;width:37px;height:11px;background:#7fa8d0;opacity:0.36;border-radius:4px;"></div>
<div class="blur" style="position:absolute;left:1012px;top:549.1px;width:88px;height:11px;background:#7fa8d0;opacity:0.36;border-radius:4px;"></div>
<div class="blur" style="position:absolute;left:1131px;top:549.1px;width:26px;height:11px;background:#7fa8d0;opacity:0.36;border-radius:4px;"></div>
<div class="blur" style="position:absolute;left:1168px;top:549.1px;width:54px;height:11px;background:#7fa8d0;opacity:0.36;border-radius:4px;"></div>
<div class="blur" style="position:absolute;left:1012px;top:589.7px;width:80px;height:11px;background:#7fa8d0;opacity:0.36;border-radius:4px;"></div>
<div class="blur" style="position:absolute;left:1108px;top:589.7px;width:14px;height:11px;background:#7fa8d0;opacity:0.36;border-radius:4px;"></div>
<div class="blur" style="position:absolute;left:1131px;top:589.7px;width:26px;height:11px;background:#7fa8d0;opacity:0.36;border-radius:4px;"></div>
<div class="blur" style="position:absolute;left:1168px;top:589.7px;width:54px;height:11px;background:#7fa8d0;opacity:0.36;border-radius:4px;"></div>
<div class="blur" style="position:absolute;left:1012px;top:630.3px;width:88px;height:11px;background:#7fa8d0;opacity:0.36;border-radius:4px;"></div>
<div class="blur" style="position:absolute;left:1131px;top:630.3px;width:26px;height:11px;background:#7fa8d0;opacity:0.36;border-radius:4px;"></div>
<div class="blur" style="position:absolute;left:1168px;top:630.3px;width:54px;height:11px;background:#7fa8d0;opacity:0.36;border-radius:4px;"></div>
<div class="blur" style="position:absolute;left:1012px;top:670.9000000000001px;width:80px;height:11px;background:#7fa8d0;opacity:0.36;border-radius:4px;"></div>
<div class="blur" style="position:absolute;left:1108px;top:670.9000000000001px;width:14px;height:11px;background:#7fa8d0;opacity:0.36;border-radius:4px;"></div>
<div class="blur" style="position:absolute;left:1131px;top:670.9000000000001px;width:26px;height:11px;background:#7fa8d0;opacity:0.36;border-radius:4px;"></div>
<div class="blur" style="position:absolute;left:1168px;top:670.9000000000001px;width:54px;height:11px;background:#7fa8d0;opacity:0.36;border-radius:4px;"></div>
<div class="blur" style="position:absolute;left:1012px;top:711.5px;width:80px;height:11px;background:#7fa8d0;opacity:0.36;border-radius:4px;"></div>
<div class="blur" style="position:absolute;left:1108px;top:711.5px;width:14px;height:11px;background:#7fa8d0;opacity:0.36;border-radius:4px;"></div>
<div class="blur" style="position:absolute;left:1131px;top:711.5px;width:26px;height:11px;background:#7fa8d0;opacity:0.36;border-radius:4px;"></div>
<div class="blur" style="position:absolute;left:1168px;top:711.5px;width:54px;height:11px;background:#7fa8d0;opacity:0.36;border-radius:4px;"></div>
<div class="blur" style="position:absolute;left:1013px;top:752.1px;width:18px;height:11px;background:#b0b0b0;opacity:0.28;border-radius:4px;"></div>
<div class="blur" style="position:absolute;left:1131px;top:752.1px;width:26px;height:11px;background:#7fa8d0;opacity:0.36;border-radius:4px;"></div>
<div class="blur" style="position:absolute;left:1168px;top:752.1px;width:54px;height:11px;background:#7fa8d0;opacity:0.36;border-radius:4px;"></div>
<div class="blur" style="position:absolute;left:1012px;top:792.7px;width:80px;height:11px;background:#7fa8d0;opacity:0.36;border-radius:4px;"></div>
<div class="blur" style="position:absolute;left:1108px;top:792.7px;width:14px;height:11px;background:#7fa8d0;opacity:0.36;border-radius:4px;"></div>
<div class="blur" style="position:absolute;left:1131px;top:792.7px;width:26px;height:11px;background:#7fa8d0;opacity:0.36;border-radius:4px;"></div>
<div class="blur" style="position:absolute;left:1168px;top:792.7px;width:54px;height:11px;background:#7fa8d0;opacity:0.36;border-radius:4px;"></div>
<div class="t" style="top:864.03px;font-size:12.3px;line-height:17.22px;height:17.22px;color:#4a4a4a;letter-spacing:-0.1px;left:261.56px;">1 - 13 of 321 (0 selected)</div>
<svg style="position:absolute;left:1221.5px;top:864.3px;overflow:visible;" width="14" height="13" viewBox="0 0 14 13" fill="none"><path d="M1 0.6 V12.4 M13 6.5 H3.2 M8.2 1.4 L3.2 6.5 L8.2 11.6" stroke="#6a6a6a" stroke-width="1.05"/></svg>
<svg style="position:absolute;left:1248.3px;top:864.3px;overflow:visible;" width="14" height="13" viewBox="0 0 14 13" fill="none"><path d="M13 6.5 H1.6 M6.6 1.4 L1.6 6.5 L6.6 11.6" stroke="#6a6a6a" stroke-width="1.05"/></svg>
<div class="t" style="top:863.0px;font-size:12.2px;line-height:17.08px;height:17.08px;color:#383736;letter-spacing:-0.55px;left:1275.9px;">Page 1</div>
<svg style="position:absolute;left:1338.5px;top:864.3px;overflow:visible;" width="14" height="13" viewBox="0 0 14 13" fill="none"><path d="M1 6.5 H12.4 M7.4 1.4 L12.4 6.5 L7.4 11.6" stroke="#3f7dbd" stroke-width="1.05"/></svg>
<div style="position:absolute;left:1397px;top:164px;width:1148px;height:729px;background:#fff;border-radius:3px;box-shadow:0 0 1.5px rgba(0,0,0,0.13),0 1px 2px rgba(0,0,0,0.10);"></div>
<div class="t" style="top:177.06px;font-size:14px;line-height:19.6px;height:19.6px;color:#383736;letter-spacing:0.12px;left:1411.74px;-webkit-text-stroke:0.35px #323130;">Web aanmeldingen</div>
<div style="position:absolute;left:1411.5px;top:206px;width:1118.5px;height:1px;background:#d6d4d2;"></div>
<svg style="position:absolute;left:2174px;top:177px;overflow:visible;" width="16" height="16" viewBox="0 0 16 16" fill="none"><path d="M8 1 V15 M1 8 H15" stroke="#444" stroke-width="1.15"/></svg>
<div class="t" style="top:175.66px;font-size:14px;line-height:19.6px;height:19.6px;color:#383736;letter-spacing:-0.3px;left:2204.85px;">New</div>
<svg style="position:absolute;left:2262.5px;top:177px;overflow:visible;" width="13" height="16" viewBox="0 0 13 16" fill="none"><path d="M0.8 3.4 H11.8 M4.4 3.2 V1.2 H8.4 V3.2 M2.1 3.4 L2.6 15 H10 L10.5 3.4" stroke="#444" stroke-width="1.1"/><rect x="3.9" y="5.2" width="4.8" height="8" fill="#bdbdbd"/><path d="M4.9 5.4 V13 M7.6 5.4 V13" stroke="#444" stroke-width="1"/></svg>
<div class="t" style="top:175.66px;font-size:14px;line-height:19.6px;height:19.6px;color:#383736;letter-spacing:0.05px;left:2292.45px;">Delete</div>
<div style="position:absolute;left:2347.2px;top:174.7px;width:1px;height:20.6px;background:#b8b6b4;"></div>
<svg style="position:absolute;left:2355px;top:180px;overflow:visible;" width="15" height="9" viewBox="0 0 15 9" fill="none"><path d="M0.8 1.2 L7.2 7.6 L13.6 1.2" stroke="#444" stroke-width="1.1"/></svg>
<svg style="position:absolute;left:2396.5px;top:177px;overflow:visible;" width="16" height="16" viewBox="0 0 16 16" fill="none"><path d="M4.6 2.2 A6.9 6.9 0 1 0 8.4 1.2" stroke="#444" stroke-width="1.1"/><path d="M5.2 -0.4 L4.6 2.2 L7.4 3" stroke="#444" stroke-width="1.1"/></svg>
<div class="t" style="top:175.66px;font-size:14px;line-height:19.6px;height:19.6px;color:#383736;letter-spacing:-0.5px;left:2427.45px;">Refresh</div>
<svg style="position:absolute;left:2507px;top:178px;overflow:visible;" width="4" height="14" viewBox="0 0 4 14" fill="none"><circle cx="2" cy="1.4" r="1.1" fill="#444"/><circle cx="2" cy="7" r="1.1" fill="#444"/><circle cx="2" cy="12.6" r="1.1" fill="#444"/></svg>
<div style="position:absolute;left:2320.3px;top:213.7px;width:207.5px;height:32.5px;border:1.4px solid #d6d6d6;background:#fff;"></div>
<div class="t" style="top:223.26px;font-size:14px;line-height:19.6px;height:19.6px;color:#6e6e6e;letter-spacing:-0.2px;left:2327.16px;">Search this view</div>
<svg style="position:absolute;left:2504px;top:223.5px;overflow:visible;" width="16" height="16" viewBox="0 0 16 16" fill="none"><circle cx="10.2" cy="6" r="4.6" stroke="#222" stroke-width="1.3"/><path d="M7 9.2 L1.4 14.8" stroke="#222" stroke-width="1.4"/></svg>
<svg style="position:absolute;left:1440.5px;top:264px;overflow:visible;" width="13" height="11" viewBox="0 0 13 11" fill="none"><path d="M1 5.6 L4.6 9.4 L12 1.4" stroke="#111" stroke-width="1.8"/></svg>
<div style="position:absolute;left:1456.2px;top:259px;width:1px;height:20.3px;background:#cfcfcf;"></div>
<div class="t" style="top:261.69px;font-size:12.5px;line-height:17.5px;height:17.5px;color:#6b6b6b;letter-spacing:-0.45px;left:1463.77px;">Cursusnaam</div>
<svg style="position:absolute;left:1536.7px;top:261.8px;overflow:visible;" width="8" height="13" viewBox="0 0 8 13" fill="none"><path d="M4 1 V12.6 M0.8 4.4 L4 1 L7.2 4.4" stroke="#6b6b6b" stroke-width="1.05"/></svg>
<svg style="position:absolute;left:1556.7px;top:265.4px;overflow:visible;" width="12" height="7.5" viewBox="0 0 12 7.5" fill="none"><path d="M0.6 0.8 L6 6.4 L11.4 0.8" stroke="#6b6b6b" stroke-width="1.05"/></svg>
<div style="position:absolute;left:1759.7px;top:259px;width:1px;height:20.3px;background:#cfcfcf;"></div>
<div class="t" style="top:261.69px;font-size:12.5px;line-height:17.5px;height:17.5px;color:#6b6b6b;letter-spacing:-0.45px;left:1766.93px;">Status cursus</div>
<svg style="position:absolute;left:1842.7px;top:265.4px;overflow:visible;" width="12" height="7.5" viewBox="0 0 12 7.5" fill="none"><path d="M0.6 0.8 L6 6.4 L11.4 0.8" stroke="#6b6b6b" stroke-width="1.05"/></svg>
<div style="position:absolute;left:1860.6px;top:259px;width:1px;height:20.3px;background:#cfcfcf;"></div>
<div class="t" style="top:261.69px;font-size:12.5px;line-height:17.5px;height:17.5px;color:#6b6b6b;letter-spacing:-0.45px;left:1867.43px;">SBA projec...</div>
<svg style="position:absolute;left:1943.4px;top:265.4px;overflow:visible;" width="12" height="7.5" viewBox="0 0 12 7.5" fill="none"><path d="M0.6 0.8 L6 6.4 L11.4 0.8" stroke="#6b6b6b" stroke-width="1.05"/></svg>
<div style="position:absolute;left:1960.6px;top:259px;width:1px;height:20.3px;background:#cfcfcf;"></div>
<div class="t" style="top:261.69px;font-size:12.5px;line-height:17.5px;height:17.5px;color:#6b6b6b;letter-spacing:-0.45px;left:1967.97px;">Price</div>
<svg style="position:absolute;left:2000.7px;top:265.4px;overflow:visible;" width="12" height="7.5" viewBox="0 0 12 7.5" fill="none"><path d="M0.6 0.8 L6 6.4 L11.4 0.8" stroke="#6b6b6b" stroke-width="1.05"/></svg>
<div style="position:absolute;left:2036.2px;top:259px;width:1px;height:20.3px;background:#cfcfcf;"></div>
<div class="t" style="top:261.69px;font-size:12.5px;line-height:17.5px;height:17.5px;color:#6b6b6b;letter-spacing:-0.45px;left:2042.97px;">Min. aantal...</div>
<svg style="position:absolute;left:2120.2px;top:265.4px;overflow:visible;" width="12" height="7.5" viewBox="0 0 12 7.5" fill="none"><path d="M0.6 0.8 L6 6.4 L11.4 0.8" stroke="#6b6b6b" stroke-width="1.05"/></svg>
<div style="position:absolute;left:2136.2px;top:259px;width:1px;height:20.3px;background:#cfcfcf;"></div>
<div class="t" style="top:261.69px;font-size:12.5px;line-height:17.5px;height:17.5px;color:#6b6b6b;letter-spacing:-0.45px;left:2142.97px;">Max Partici...</div>
<svg style="position:absolute;left:2220.7px;top:265.4px;overflow:visible;" width="12" height="7.5" viewBox="0 0 12 7.5" fill="none"><path d="M0.6 0.8 L6 6.4 L11.4 0.8" stroke="#6b6b6b" stroke-width="1.05"/></svg>
<div style="position:absolute;left:2236.5px;top:259px;width:1px;height:20.3px;background:#cfcfcf;"></div>
<div class="t" style="top:261.69px;font-size:12.5px;line-height:17.5px;height:17.5px;color:#6b6b6b;letter-spacing:-0.45px;left:2243.67px;">Numb...</div>
<svg style="position:absolute;left:2294.7px;top:265.4px;overflow:visible;" width="12" height="7.5" viewBox="0 0 12 7.5" fill="none"><path d="M0.6 0.8 L6 6.4 L11.4 0.8" stroke="#6b6b6b" stroke-width="1.05"/></svg>
<div style="position:absolute;left:2312px;top:259px;width:1px;height:20.3px;background:#cfcfcf;"></div>
<div class="t" style="top:261.69px;font-size:12.5px;line-height:17.5px;height:17.5px;color:#6b6b6b;letter-spacing:-0.45px;left:2318.74px;">Unit of Ses...</div>
<svg style="position:absolute;left:2395.7px;top:265.4px;overflow:visible;" width="12" height="7.5" viewBox="0 0 12 7.5" fill="none"><path d="M0.6 0.8 L6 6.4 L11.4 0.8" stroke="#6b6b6b" stroke-width="1.05"/></svg>
<div style="position:absolute;left:2412.3px;top:259px;width:1px;height:20.3px;background:#cfcfcf;"></div>
<div class="t" style="top:261.69px;font-size:12.5px;line-height:17.5px;height:17.5px;color:#6b6b6b;letter-spacing:-0.45px;left:2418.65px;">In samenw...</div>
<svg style="position:absolute;left:2496.3999999999996px;top:265.4px;overflow:visible;" width="12" height="7.5" viewBox="0 0 12 7.5" fill="none"><path d="M0.6 0.8 L6 6.4 L11.4 0.8" stroke="#6b6b6b" stroke-width="1.05"/></svg>
<div style="position:absolute;left:2512.6px;top:259px;width:1px;height:20.3px;background:#cfcfcf;"></div>
<div class="t" style="top:261.69px;font-size:12.5px;line-height:17.5px;height:17.5px;color:#6b6b6b;letter-spacing:-0.45px;left:2519.57px;width:11.03px;overflow:hidden;">Pu</div>
<div style="position:absolute;left:1411.5px;top:288px;width:1119px;height:2px;background:#e1dfdd;"></div>
<div class="t" style="top:301.26px;font-size:14px;line-height:19.6px;height:19.6px;color:#3470a6;left:1464.57px;">ADHD</div>
<div class="t" style="top:299.27px;font-size:15px;line-height:21.0px;height:21.0px;color:#383736;letter-spacing:0.1px;left:1767.97px;">Actief</div>
<div class="t" style="top:299.27px;font-size:15px;line-height:21.0px;height:21.0px;color:#383736;letter-spacing:-0.3px;left:1867.56px;">1899</div>
<div class="t" style="top:299.27px;font-size:15px;line-height:21.0px;height:21.0px;color:#383736;letter-spacing:-0.25px;left:1969.68px;">€ 149,00</div>
<div class="t" style="top:299.27px;font-size:15px;line-height:21.0px;height:21.0px;color:#383736;left:1527.11px;width:600px;text-align:right;">9</div>
<div class="t" style="top:299.27px;font-size:15px;line-height:21.0px;height:21.0px;color:#383736;left:1627.33px;width:600px;text-align:right;">15</div>
<div class="t" style="top:299.27px;font-size:15px;line-height:21.0px;height:21.0px;color:#383736;left:1702.43px;width:600px;text-align:right;">1</div>
<div class="t" style="top:299.27px;font-size:15px;line-height:21.0px;height:21.0px;color:#383736;letter-spacing:-0.2px;left:2318.95px;">2,5 Hours</div>
<div class="t" style="top:299.27px;font-size:15px;line-height:21.0px;height:21.0px;color:#383736;letter-spacing:0.6px;left:2419.83px;">---</div>
<div class="t" style="top:300.36px;font-size:14px;line-height:19.6px;height:19.6px;color:#383736;left:2520.29px;width:10.31px;overflow:hidden;">Yes</div>
<div style="position:absolute;left:1431.5px;top:329.0px;width:1099.5px;height:1px;background:#edebe9;"></div>
<div class="t" style="top:341.86px;font-size:14px;line-height:19.6px;height:19.6px;color:#3470a6;left:1464.57px;">Advies- en verkoopvaardigheden</div>
<div class="t" style="top:339.87px;font-size:15px;line-height:21.0px;height:21.0px;color:#383736;letter-spacing:0.1px;left:1767.97px;">Actief</div>
<div class="t" style="top:339.87px;font-size:15px;line-height:21.0px;height:21.0px;color:#383736;letter-spacing:-0.3px;left:1867.56px;">1851</div>
<div class="t" style="top:339.87px;font-size:15px;line-height:21.0px;height:21.0px;color:#383736;letter-spacing:-0.25px;left:1969.68px;">€ 240,00</div>
<div class="t" style="top:339.87px;font-size:15px;line-height:21.0px;height:21.0px;color:#383736;left:1527.11px;width:600px;text-align:right;">9</div>
<div class="t" style="top:339.87px;font-size:15px;line-height:21.0px;height:21.0px;color:#383736;left:1627.33px;width:600px;text-align:right;">15</div>
<div class="t" style="top:339.87px;font-size:15px;line-height:21.0px;height:21.0px;color:#383736;left:1702.45px;width:600px;text-align:right;">2</div>
<div class="t" style="top:339.87px;font-size:15px;line-height:21.0px;height:21.0px;color:#383736;letter-spacing:-0.2px;left:2319.13px;">3 Hours</div>
<div class="blur" style="position:absolute;left:2421px;top:346.1px;width:34px;height:11px;background:#7fa8d0;opacity:0.36;border-radius:4px;"></div>
<div class="blur" style="position:absolute;left:2454px;top:346.6px;width:39px;height:11px;background:#7fa8d0;opacity:0.36;border-radius:4px;"></div>
<div class="t" style="top:340.96px;font-size:14px;line-height:19.6px;height:19.6px;color:#383736;left:2520.29px;width:10.31px;overflow:hidden;">Yes</div>
<div style="position:absolute;left:1431.5px;top:369.6px;width:1099.5px;height:1px;background:#edebe9;"></div>
<div class="t" style="top:382.46px;font-size:14px;line-height:19.6px;height:19.6px;color:#3470a6;left:1464.57px;">Agressie in de  apotheek, de basisprincipes</div>
<div class="t" style="top:380.47px;font-size:15px;line-height:21.0px;height:21.0px;color:#383736;letter-spacing:0.1px;left:1767.97px;">Actief</div>
<div class="t" style="top:380.47px;font-size:15px;line-height:21.0px;height:21.0px;color:#383736;letter-spacing:-0.3px;left:1867.56px;">1914</div>
<div class="t" style="top:380.47px;font-size:15px;line-height:21.0px;height:21.0px;color:#383736;letter-spacing:-0.25px;left:1969.68px;">€ 1.75…</div>
<div class="t" style="top:380.47px;font-size:15px;line-height:21.0px;height:21.0px;color:#383736;left:1527.11px;width:600px;text-align:right;">9</div>
<div class="t" style="top:380.47px;font-size:15px;line-height:21.0px;height:21.0px;color:#383736;left:1627.33px;width:600px;text-align:right;">15</div>
<div class="t" style="top:380.47px;font-size:15px;line-height:21.0px;height:21.0px;color:#383736;left:1702.43px;width:600px;text-align:right;">1</div>
<div class="t" style="top:380.47px;font-size:15px;line-height:21.0px;height:21.0px;color:#383736;letter-spacing:-0.2px;left:2319.13px;">3 Hours</div>
<div class="t" style="top:380.47px;font-size:15px;line-height:21.0px;height:21.0px;color:#383736;letter-spacing:0.6px;left:2419.83px;">---</div>
<div class="t" style="top:381.56px;font-size:14px;line-height:19.6px;height:19.6px;color:#383736;left:2520.29px;width:10.31px;overflow:hidden;">Yes</div>
<div style="position:absolute;left:1431.5px;top:410.2px;width:1099.5px;height:1px;background:#edebe9;"></div>
<div class="t" style="top:423.06px;font-size:14px;line-height:19.6px;height:19.6px;color:#3470a6;left:1464.57px;">Agressie in de apotheek, de praktijk</div>
<div class="t" style="top:421.07px;font-size:15px;line-height:21.0px;height:21.0px;color:#383736;letter-spacing:0.1px;left:1767.97px;">Actief</div>
<div class="t" style="top:421.07px;font-size:15px;line-height:21.0px;height:21.0px;color:#383736;letter-spacing:-0.3px;left:1867.56px;">1915</div>
<div class="t" style="top:421.07px;font-size:15px;line-height:21.0px;height:21.0px;color:#383736;letter-spacing:-0.25px;left:1969.68px;">€ 1.75…</div>
<div class="t" style="top:421.07px;font-size:15px;line-height:21.0px;height:21.0px;color:#383736;left:1527.11px;width:600px;text-align:right;">9</div>
<div class="t" style="top:421.07px;font-size:15px;line-height:21.0px;height:21.0px;color:#383736;left:1627.33px;width:600px;text-align:right;">15</div>
<div class="t" style="top:421.07px;font-size:15px;line-height:21.0px;height:21.0px;color:#383736;left:1702.43px;width:600px;text-align:right;">1</div>
<div class="t" style="top:421.07px;font-size:15px;line-height:21.0px;height:21.0px;color:#383736;letter-spacing:-0.2px;left:2319.13px;">3 Hours</div>
<div class="t" style="top:421.07px;font-size:15px;line-height:21.0px;height:21.0px;color:#383736;letter-spacing:0.6px;left:2419.83px;">---</div>
<div class="t" style="top:422.16px;font-size:14px;line-height:19.6px;height:19.6px;color:#383736;left:2520.29px;width:10.31px;overflow:hidden;">Yes</div>
<div style="position:absolute;left:1431.5px;top:450.8px;width:1099.5px;height:1px;background:#edebe9;"></div>
<div class="t" style="top:463.66px;font-size:14px;line-height:19.6px;height:19.6px;color:#3470a6;left:1464.57px;">Antistolling en trombose</div>
<div class="t" style="top:461.67px;font-size:15px;line-height:21.0px;height:21.0px;color:#383736;letter-spacing:0.1px;left:1767.97px;">Actief</div>
<div class="t" style="top:461.67px;font-size:15px;line-height:21.0px;height:21.0px;color:#383736;letter-spacing:-0.3px;left:1867.56px;">1828</div>
<div class="t" style="top:461.67px;font-size:15px;line-height:21.0px;height:21.0px;color:#383736;letter-spacing:-0.25px;left:1969.68px;">€ 149,00</div>
<div class="t" style="top:461.67px;font-size:15px;line-height:21.0px;height:21.0px;color:#383736;left:1527.11px;width:600px;text-align:right;">9</div>
<div class="t" style="top:461.67px;font-size:15px;line-height:21.0px;height:21.0px;color:#383736;left:1627.33px;width:600px;text-align:right;">15</div>
<div class="t" style="top:461.67px;font-size:15px;line-height:21.0px;height:21.0px;color:#383736;left:1702.43px;width:600px;text-align:right;">1</div>
<div class="t" style="top:461.67px;font-size:15px;line-height:21.0px;height:21.0px;color:#383736;letter-spacing:-0.2px;left:2318.95px;">2,5 Hours</div>
<div class="t" style="top:461.67px;font-size:15px;line-height:21.0px;height:21.0px;color:#383736;letter-spacing:0.6px;left:2419.83px;">---</div>
<div class="t" style="top:462.76px;font-size:14px;line-height:19.6px;height:19.6px;color:#383736;left:2520.29px;width:10.31px;overflow:hidden;">Yes</div>
<div style="position:absolute;left:1431.5px;top:491.4px;width:1099.5px;height:1px;background:#edebe9;"></div>
<div class="t" style="top:504.26px;font-size:14px;line-height:19.6px;height:19.6px;color:#3470a6;left:1464.57px;">Astma en COPD</div>
<div class="t" style="top:502.27px;font-size:15px;line-height:21.0px;height:21.0px;color:#383736;letter-spacing:0.1px;left:1767.97px;">Actief</div>
<div class="t" style="top:502.27px;font-size:15px;line-height:21.0px;height:21.0px;color:#383736;letter-spacing:-0.3px;left:1867.56px;">1908</div>
<div class="t" style="top:502.27px;font-size:15px;line-height:21.0px;height:21.0px;color:#383736;letter-spacing:-0.25px;left:1969.68px;">€ 149,00</div>
<div class="t" style="top:502.27px;font-size:15px;line-height:21.0px;height:21.0px;color:#383736;left:1527.11px;width:600px;text-align:right;">9</div>
<div class="t" style="top:502.27px;font-size:15px;line-height:21.0px;height:21.0px;color:#383736;left:1627.33px;width:600px;text-align:right;">15</div>
<div class="t" style="top:502.27px;font-size:15px;line-height:21.0px;height:21.0px;color:#383736;left:1702.43px;width:600px;text-align:right;">1</div>
<div class="t" style="top:502.27px;font-size:15px;line-height:21.0px;height:21.0px;color:#383736;letter-spacing:-0.2px;left:2318.95px;">2,5 Hours</div>
<div class="t" style="top:502.27px;font-size:15px;line-height:21.0px;height:21.0px;color:#383736;letter-spacing:0.6px;left:2419.83px;">---</div>
<div class="t" style="top:503.36px;font-size:14px;line-height:19.6px;height:19.6px;color:#383736;left:2520.29px;width:10.31px;overflow:hidden;">Yes</div>
<div style="position:absolute;left:1431.5px;top:532.0px;width:1099.5px;height:1px;background:#edebe9;"></div>
<div class="t" style="top:544.86px;font-size:14px;line-height:19.6px;height:19.6px;color:#3470a6;left:1463.45px;">Bezorgen met zorg</div>
<div class="t" style="top:542.87px;font-size:15px;line-height:21.0px;height:21.0px;color:#383736;letter-spacing:0.1px;left:1767.97px;">Actief</div>
<div class="t" style="top:542.87px;font-size:15px;line-height:21.0px;height:21.0px;color:#383736;letter-spacing:-0.3px;left:1868.03px;">---</div>
<div class="t" style="top:542.87px;font-size:15px;line-height:21.0px;height:21.0px;color:#383736;letter-spacing:-0.25px;left:1969.68px;">€ 149,00</div>
<div class="t" style="top:542.87px;font-size:15px;line-height:21.0px;height:21.0px;color:#383736;left:1527.11px;width:600px;text-align:right;">9</div>
<div class="t" style="top:542.87px;font-size:15px;line-height:21.0px;height:21.0px;color:#383736;left:1627.33px;width:600px;text-align:right;">15</div>
<div class="t" style="top:542.87px;font-size:15px;line-height:21.0px;height:21.0px;color:#383736;left:1702.43px;width:600px;text-align:right;">1</div>
<div class="t" style="top:542.87px;font-size:15px;line-height:21.0px;height:21.0px;color:#383736;letter-spacing:-0.2px;left:2318.95px;">2,5 Hours</div>
<div class="t" style="top:542.87px;font-size:15px;line-height:21.0px;height:21.0px;color:#383736;letter-spacing:0.6px;left:2419.83px;">---</div>
<div class="t" style="top:543.96px;font-size:14px;line-height:19.6px;height:19.6px;color:#383736;left:2520.29px;width:10.31px;overflow:hidden;">Yes</div>
<div style="position:absolute;left:1431.5px;top:572.6px;width:1099.5px;height:1px;background:#edebe9;"></div>
<div class="t" style="top:585.46px;font-size:14px;line-height:19.6px;height:19.6px;color:#3470a6;left:1463.45px;">Bijwerkingen, interacties en contra-indicaties</div>
<div class="t" style="top:583.47px;font-size:15px;line-height:21.0px;height:21.0px;color:#383736;letter-spacing:0.1px;left:1767.97px;">Actief</div>
<div class="t" style="top:583.47px;font-size:15px;line-height:21.0px;height:21.0px;color:#383736;letter-spacing:-0.3px;left:1867.56px;">1886</div>
<div class="t" style="top:583.47px;font-size:15px;line-height:21.0px;height:21.0px;color:#383736;letter-spacing:-0.25px;left:1969.68px;">€ 149,00</div>
<div class="t" style="top:583.47px;font-size:15px;line-height:21.0px;height:21.0px;color:#383736;left:1527.11px;width:600px;text-align:right;">9</div>
<div class="t" style="top:583.47px;font-size:15px;line-height:21.0px;height:21.0px;color:#383736;left:1627.33px;width:600px;text-align:right;">15</div>
<div class="t" style="top:583.47px;font-size:15px;line-height:21.0px;height:21.0px;color:#383736;left:1702.43px;width:600px;text-align:right;">1</div>
<div class="t" style="top:583.47px;font-size:15px;line-height:21.0px;height:21.0px;color:#383736;letter-spacing:-0.2px;left:2318.95px;">2,5 Hours</div>
<div class="t" style="top:583.47px;font-size:15px;line-height:21.0px;height:21.0px;color:#383736;letter-spacing:0.6px;left:2419.83px;">---</div>
<div class="t" style="top:584.56px;font-size:14px;line-height:19.6px;height:19.6px;color:#383736;left:2520.29px;width:10.31px;overflow:hidden;">Yes</div>
<div style="position:absolute;left:1431.5px;top:613.2px;width:1099.5px;height:1px;background:#edebe9;"></div>
<div class="t" style="top:626.06px;font-size:14px;line-height:19.6px;height:19.6px;color:#3470a6;left:1463.45px;">Borderline persoonlijkheidsstoornissen</div>
<div class="t" style="top:624.07px;font-size:15px;line-height:21.0px;height:21.0px;color:#383736;letter-spacing:0.1px;left:1767.97px;">Actief</div>
<div class="t" style="top:624.07px;font-size:15px;line-height:21.0px;height:21.0px;color:#383736;letter-spacing:-0.3px;left:1867.56px;">1900</div>
<div class="t" style="top:624.07px;font-size:15px;line-height:21.0px;height:21.0px;color:#383736;letter-spacing:-0.25px;left:1969.68px;">€ 149,00</div>
<div class="t" style="top:624.07px;font-size:15px;line-height:21.0px;height:21.0px;color:#383736;left:1527.11px;width:600px;text-align:right;">9</div>
<div class="t" style="top:624.07px;font-size:15px;line-height:21.0px;height:21.0px;color:#383736;left:1627.33px;width:600px;text-align:right;">15</div>
<div class="t" style="top:624.07px;font-size:15px;line-height:21.0px;height:21.0px;color:#383736;left:1702.43px;width:600px;text-align:right;">1</div>
<div class="t" style="top:624.07px;font-size:15px;line-height:21.0px;height:21.0px;color:#383736;letter-spacing:-0.2px;left:2318.95px;">2,5 Hours</div>
<div class="t" style="top:624.07px;font-size:15px;line-height:21.0px;height:21.0px;color:#383736;letter-spacing:0.6px;left:2419.83px;">---</div>
<div class="t" style="top:625.16px;font-size:14px;line-height:19.6px;height:19.6px;color:#383736;left:2520.29px;width:10.31px;overflow:hidden;">Yes</div>
<div style="position:absolute;left:1431.5px;top:653.8px;width:1099.5px;height:1px;background:#edebe9;"></div>
<div class="t" style="top:666.66px;font-size:14px;line-height:19.6px;height:19.6px;color:#3470a6;left:1463.89px;">Cholesterol en hoge bloeddruk</div>
<div class="t" style="top:664.67px;font-size:15px;line-height:21.0px;height:21.0px;color:#383736;letter-spacing:0.1px;left:1767.97px;">Actief</div>
<div class="t" style="top:664.67px;font-size:15px;line-height:21.0px;height:21.0px;color:#383736;letter-spacing:-0.3px;left:1867.56px;">1909</div>
<div class="t" style="top:664.67px;font-size:15px;line-height:21.0px;height:21.0px;color:#383736;letter-spacing:-0.25px;left:1969.68px;">€ 149,00</div>
<div class="t" style="top:664.67px;font-size:15px;line-height:21.0px;height:21.0px;color:#383736;left:1527.11px;width:600px;text-align:right;">9</div>
<div class="t" style="top:664.67px;font-size:15px;line-height:21.0px;height:21.0px;color:#383736;left:1627.33px;width:600px;text-align:right;">15</div>
<div class="t" style="top:664.67px;font-size:15px;line-height:21.0px;height:21.0px;color:#383736;left:1702.43px;width:600px;text-align:right;">1</div>
<div class="t" style="top:664.67px;font-size:15px;line-height:21.0px;height:21.0px;color:#383736;letter-spacing:-0.2px;left:2318.95px;">2,5 Hours</div>
<div class="t" style="top:664.67px;font-size:15px;line-height:21.0px;height:21.0px;color:#383736;letter-spacing:0.6px;left:2419.83px;">---</div>
<div class="t" style="top:665.76px;font-size:14px;line-height:19.6px;height:19.6px;color:#383736;left:2520.29px;width:10.31px;overflow:hidden;">Yes</div>
<div style="position:absolute;left:1431.5px;top:694.4000000000001px;width:1099.5px;height:1px;background:#edebe9;"></div>
<div class="t" style="top:707.26px;font-size:14px;line-height:19.6px;height:19.6px;color:#3470a6;left:1463.89px;">Cliënten met kanker</div>
<div class="t" style="top:705.27px;font-size:15px;line-height:21.0px;height:21.0px;color:#383736;letter-spacing:0.1px;left:1767.97px;">Actief</div>
<div class="t" style="top:705.27px;font-size:15px;line-height:21.0px;height:21.0px;color:#383736;letter-spacing:-0.3px;left:1867.56px;">1840</div>
<div class="t" style="top:705.27px;font-size:15px;line-height:21.0px;height:21.0px;color:#383736;letter-spacing:-0.25px;left:1969.68px;">€ 149,00</div>
<div class="t" style="top:705.27px;font-size:15px;line-height:21.0px;height:21.0px;color:#383736;left:1527.11px;width:600px;text-align:right;">9</div>
<div class="t" style="top:705.27px;font-size:15px;line-height:21.0px;height:21.0px;color:#383736;left:1627.33px;width:600px;text-align:right;">15</div>
<div class="t" style="top:705.27px;font-size:15px;line-height:21.0px;height:21.0px;color:#383736;left:1702.43px;width:600px;text-align:right;">1</div>
<div class="t" style="top:705.27px;font-size:15px;line-height:21.0px;height:21.0px;color:#383736;letter-spacing:-0.2px;left:2318.95px;">2,5 Hours</div>
<div class="t" style="top:705.27px;font-size:15px;line-height:21.0px;height:21.0px;color:#383736;letter-spacing:0.6px;left:2419.83px;">---</div>
<div class="t" style="top:706.36px;font-size:14px;line-height:19.6px;height:19.6px;color:#383736;left:2520.29px;width:10.31px;overflow:hidden;">Yes</div>
<div style="position:absolute;left:1431.5px;top:735.0px;width:1099.5px;height:1px;background:#edebe9;"></div>
<div class="t" style="top:747.86px;font-size:14px;line-height:19.6px;height:19.6px;color:#3470a6;left:1463.89px;">Cliëntgericht telefoneren</div>
<div class="t" style="top:745.87px;font-size:15px;line-height:21.0px;height:21.0px;color:#383736;letter-spacing:0.1px;left:1767.97px;">Actief</div>
<div class="t" style="top:745.87px;font-size:15px;line-height:21.0px;height:21.0px;color:#383736;letter-spacing:-0.3px;left:1867.56px;">1903</div>
<div class="t" style="top:745.87px;font-size:15px;line-height:21.0px;height:21.0px;color:#383736;letter-spacing:-0.25px;left:1969.68px;">€ 240,00</div>
<div class="t" style="top:745.87px;font-size:15px;line-height:21.0px;height:21.0px;color:#383736;left:1527.11px;width:600px;text-align:right;">9</div>
<div class="t" style="top:745.87px;font-size:15px;line-height:21.0px;height:21.0px;color:#383736;left:1627.33px;width:600px;text-align:right;">15</div>
<div class="t" style="top:745.87px;font-size:15px;line-height:21.0px;height:21.0px;color:#383736;left:1702.45px;width:600px;text-align:right;">2</div>
<div class="t" style="top:745.87px;font-size:15px;line-height:21.0px;height:21.0px;color:#383736;letter-spacing:-0.2px;left:2319.13px;">3 Hours</div>
<div class="t" style="top:745.87px;font-size:15px;line-height:21.0px;height:21.0px;color:#383736;letter-spacing:0.6px;left:2419.83px;">---</div>
<div class="t" style="top:746.96px;font-size:14px;line-height:19.6px;height:19.6px;color:#383736;left:2520.29px;width:10.31px;overflow:hidden;">Yes</div>
<div style="position:absolute;left:1431.5px;top:775.6px;width:1099.5px;height:1px;background:#edebe9;"></div>
<div class="t" style="top:788.46px;font-size:14px;line-height:19.6px;height:19.6px;color:#3470a6;left:1463.89px;">Coördinerend werken in de apotheek</div>
<div class="t" style="top:786.47px;font-size:15px;line-height:21.0px;height:21.0px;color:#383736;letter-spacing:0.1px;left:1767.97px;">Actief</div>
<div class="t" style="top:786.47px;font-size:15px;line-height:21.0px;height:21.0px;color:#383736;letter-spacing:-0.3px;left:1867.56px;">1853</div>
<div class="t" style="top:786.47px;font-size:15px;line-height:21.0px;height:21.0px;color:#383736;letter-spacing:-0.25px;left:1969.68px;">€ 240,00</div>
<div class="t" style="top:786.47px;font-size:15px;line-height:21.0px;height:21.0px;color:#383736;left:1527.05px;width:600px;text-align:right;">8</div>
<div class="t" style="top:786.47px;font-size:15px;line-height:21.0px;height:21.0px;color:#383736;left:1627.33px;width:600px;text-align:right;">15</div>
<div class="t" style="top:786.47px;font-size:15px;line-height:21.0px;height:21.0px;color:#383736;left:1702.45px;width:600px;text-align:right;">2</div>
<div class="t" style="top:786.47px;font-size:15px;line-height:21.0px;height:21.0px;color:#383736;letter-spacing:-0.2px;left:2318.95px;">2,5 Hours</div>
<div class="t" style="top:786.47px;font-size:15px;line-height:21.0px;height:21.0px;color:#383736;letter-spacing:0.6px;left:2419.83px;">---</div>
<div class="t" style="top:787.56px;font-size:14px;line-height:19.6px;height:19.6px;color:#383736;left:2520.29px;width:10.31px;overflow:hidden;">Yes</div>
<div style="position:absolute;left:1431.5px;top:816.2px;width:1099.5px;height:1px;background:#edebe9;"></div>
<div style="position:absolute;left:1411.5px;top:833.7px;width:1119.3px;height:16px;background:#f1f1f1;"></div>
<div style="position:absolute;left:1428px;top:834.8px;width:933px;height:14.2px;background:#c1c1c1;"></div>
<svg style="position:absolute;left:1417px;top:838.5px;overflow:visible;" width="6" height="8" viewBox="0 0 6 8" fill="none"><path d="M4.6 0.6 V7.4 L0.8 4 Z" fill="#8a8a8a"/></svg>
<svg style="position:absolute;left:2520px;top:838.5px;overflow:visible;" width="6" height="8" viewBox="0 0 6 8" fill="none"><path d="M1.2 0.6 V7.4 L5 4 Z" fill="#505050"/></svg>
<div class="t" style="top:864.03px;font-size:12.3px;line-height:17.22px;height:17.22px;color:#4a4a4a;letter-spacing:-0.05px;left:1425.86px;">1 - 13 of 58 (0 selected)</div>
<svg style="position:absolute;left:2385.5px;top:864.3px;overflow:visible;" width="14" height="13" viewBox="0 0 14 13" fill="none"><path d="M1 0.6 V12.4 M13 6.5 H3.2 M8.2 1.4 L3.2 6.5 L8.2 11.6" stroke="#6a6a6a" stroke-width="1.05"/></svg>
<svg style="position:absolute;left:2412.3px;top:864.3px;overflow:visible;" width="14" height="13" viewBox="0 0 14 13" fill="none"><path d="M13 6.5 H1.6 M6.6 1.4 L1.6 6.5 L6.6 11.6" stroke="#6a6a6a" stroke-width="1.05"/></svg>
<div class="t" style="top:863.0px;font-size:12.2px;line-height:17.08px;height:17.08px;color:#383736;letter-spacing:-0.55px;left:2439.9px;">Page 1</div>
<svg style="position:absolute;left:2502.5px;top:864.3px;overflow:visible;" width="14" height="13" viewBox="0 0 14 13" fill="none"><path d="M1 6.5 H12.4 M7.4 1.4 L12.4 6.5 L7.4 11.6" stroke="#3f7dbd" stroke-width="1.05"/></svg>
<div style="position:absolute;left:233px;top:909px;width:1148px;height:500px;background:#fff;border-radius:3px;box-shadow:0 0 1.5px rgba(0,0,0,0.13),0 1px 2px rgba(0,0,0,0.10);"></div>
<div class="t" style="top:922.56px;font-size:14px;line-height:19.6px;height:19.6px;color:#383736;letter-spacing:0.12px;left:246.65px;-webkit-text-stroke:0.35px #323130;">Evaluaties</div>
<div style="position:absolute;left:247.5px;top:951.5px;width:1118.5px;height:1px;background:#d6d4d2;"></div>
<svg style="position:absolute;left:1010px;top:922.5px;overflow:visible;" width="16" height="16" viewBox="0 0 16 16" fill="none"><path d="M8 1 V15 M1 8 H15" stroke="#444" stroke-width="1.15"/></svg>
<div class="t" style="top:921.16px;font-size:14px;line-height:19.6px;height:19.6px;color:#383736;letter-spacing:-0.3px;left:1040.85px;">New</div>
<svg style="position:absolute;left:1098.5px;top:922.5px;overflow:visible;" width="13" height="16" viewBox="0 0 13 16" fill="none"><path d="M0.8 3.4 H11.8 M4.4 3.2 V1.2 H8.4 V3.2 M2.1 3.4 L2.6 15 H10 L10.5 3.4" stroke="#444" stroke-width="1.1"/><rect x="3.9" y="5.2" width="4.8" height="8" fill="#bdbdbd"/><path d="M4.9 5.4 V13 M7.6 5.4 V13" stroke="#444" stroke-width="1"/></svg>
<div class="t" style="top:921.16px;font-size:14px;line-height:19.6px;height:19.6px;color:#383736;letter-spacing:0.05px;left:1128.45px;">Delete</div>
<div style="position:absolute;left:1183.2px;top:920.2px;width:1px;height:20.6px;background:#b8b6b4;"></div>
<svg style="position:absolute;left:1191px;top:925.5px;overflow:visible;" width="15" height="9" viewBox="0 0 15 9" fill="none"><path d="M0.8 1.2 L7.2 7.6 L13.6 1.2" stroke="#444" stroke-width="1.1"/></svg>
<svg style="position:absolute;left:1232.5px;top:922.5px;overflow:visible;" width="16" height="16" viewBox="0 0 16 16" fill="none"><path d="M4.6 2.2 A6.9 6.9 0 1 0 8.4 1.2" stroke="#444" stroke-width="1.1"/><path d="M5.2 -0.4 L4.6 2.2 L7.4 3" stroke="#444" stroke-width="1.1"/></svg>
<div class="t" style="top:921.16px;font-size:14px;line-height:19.6px;height:19.6px;color:#383736;letter-spacing:-0.5px;left:1263.45px;">Refresh</div>
<svg style="position:absolute;left:1343px;top:923.5px;overflow:visible;" width="4" height="14" viewBox="0 0 4 14" fill="none"><circle cx="2" cy="1.4" r="1.1" fill="#444"/><circle cx="2" cy="7" r="1.1" fill="#444"/><circle cx="2" cy="12.6" r="1.1" fill="#444"/></svg>
<div style="position:absolute;left:1156.3px;top:959.2px;width:207.5px;height:32.5px;border:1.4px solid #d6d6d6;background:#fff;"></div>
<div class="t" style="top:968.76px;font-size:14px;line-height:19.6px;height:19.6px;color:#6e6e6e;letter-spacing:-0.2px;left:1163.16px;">Search this view</div>
<svg style="position:absolute;left:1340px;top:969.0px;overflow:visible;" width="16" height="16" viewBox="0 0 16 16" fill="none"><circle cx="10.2" cy="6" r="4.6" stroke="#222" stroke-width="1.3"/><path d="M7 9.2 L1.4 14.8" stroke="#222" stroke-width="1.4"/></svg>
<svg style="position:absolute;left:275.5px;top:1009.5px;overflow:visible;" width="13" height="11" viewBox="0 0 13 11" fill="none"><path d="M1 5.6 L4.6 9.4 L12 1.4" stroke="#111" stroke-width="1.8"/></svg>
<div style="position:absolute;left:292.3px;top:1004.5px;width:1px;height:20.3px;background:#cfcfcf;"></div>
<div class="t" style="top:1007.19px;font-size:12.5px;line-height:17.5px;height:17.5px;color:#6b6b6b;letter-spacing:-0.45px;left:298.97px;">Evenementnummer</div>
<svg style="position:absolute;left:410.09999999999997px;top:1010.9px;overflow:visible;" width="12" height="7.5" viewBox="0 0 12 7.5" fill="none"><path d="M0.6 0.8 L6 6.4 L11.4 0.8" stroke="#6b6b6b" stroke-width="1.05"/></svg>
<div style="position:absolute;left:443.7px;top:1004.5px;width:1px;height:20.3px;background:#cfcfcf;"></div>
<div class="t" style="top:1007.19px;font-size:12.5px;line-height:17.5px;height:17.5px;color:#6b6b6b;letter-spacing:-0.45px;left:450.87px;">Cursusnaam (Cursus)</div>
<svg style="position:absolute;left:569.1px;top:1010.9px;overflow:visible;" width="12" height="7.5" viewBox="0 0 12 7.5" fill="none"><path d="M0.6 0.8 L6 6.4 L11.4 0.8" stroke="#6b6b6b" stroke-width="1.05"/></svg>
<div style="position:absolute;left:747.3px;top:1004.5px;width:1px;height:20.3px;background:#cfcfcf;"></div>
<div class="t" style="top:1007.19px;font-size:12.5px;line-height:17.5px;height:17.5px;color:#6b6b6b;letter-spacing:-0.45px;left:754.33px;">Startdatum</div>
<svg style="position:absolute;left:818.7px;top:1010.9px;overflow:visible;" width="12" height="7.5" viewBox="0 0 12 7.5" fill="none"><path d="M0.6 0.8 L6 6.4 L11.4 0.8" stroke="#6b6b6b" stroke-width="1.05"/></svg>
<div style="position:absolute;left:898.4px;top:1004.5px;width:1px;height:20.3px;background:#cfcfcf;"></div>
<div class="t" style="top:1007.19px;font-size:12.5px;line-height:17.5px;height:17.5px;color:#6b6b6b;letter-spacing:-0.45px;left:904.97px;">Evaluatie Datum</div>
<svg style="position:absolute;left:1000.2px;top:1007.2px;overflow:visible;" width="8" height="13" viewBox="0 0 8 13" fill="none"><path d="M4 0.4 V12 M0.8 8.6 L4 12 L7.2 8.6" stroke="#6b6b6b" stroke-width="1.05"/></svg>
<svg style="position:absolute;left:1021.2px;top:1010.9px;overflow:visible;" width="12" height="7.5" viewBox="0 0 12 7.5" fill="none"><path d="M0.6 0.8 L6 6.4 L11.4 0.8" stroke="#6b6b6b" stroke-width="1.05"/></svg>
<div style="position:absolute;left:1049.3px;top:1004.5px;width:1px;height:20.3px;background:#cfcfcf;"></div>
<div class="t" style="top:1007.19px;font-size:12.5px;line-height:17.5px;height:17.5px;color:#6b6b6b;letter-spacing:-0.45px;left:1057.38px;">Aantal inschrijvingen</div>
<svg style="position:absolute;left:1174.4px;top:1010.9px;overflow:visible;" width="12" height="7.5" viewBox="0 0 12 7.5" fill="none"><path d="M0.6 0.8 L6 6.4 L11.4 0.8" stroke="#6b6b6b" stroke-width="1.05"/></svg>
<div style="position:absolute;left:1200.7px;top:1004.5px;width:1px;height:20.3px;background:#cfcfcf;"></div>
<div class="t" style="top:1007.19px;font-size:12.5px;line-height:17.5px;height:17.5px;color:#6b6b6b;letter-spacing:-0.45px;left:1207.77px;">Evaluatie Aantal Rea...</div>
<svg style="position:absolute;left:1335.7px;top:1010.9px;overflow:visible;" width="12" height="7.5" viewBox="0 0 12 7.5" fill="none"><path d="M0.6 0.8 L6 6.4 L11.4 0.8" stroke="#6b6b6b" stroke-width="1.05"/></svg>
<div style="position:absolute;left:1352px;top:1004.5px;width:1px;height:20.3px;background:#cfcfcf;"></div>
<div class="t" style="top:1007.19px;font-size:12.5px;line-height:17.5px;height:17.5px;color:#6b6b6b;letter-spacing:-0.45px;left:1358.67px;width:7.83px;overflow:hidden;">E</div>
<div style="position:absolute;left:247.5px;top:1034.0px;width:1119px;height:2px;background:#e1dfdd;"></div>
<div class="t" style="top:1045.27px;font-size:15px;line-height:21.0px;height:21.0px;color:#383736;letter-spacing:-0.3px;left:-166.55px;width:600px;text-align:right;">14.428</div>
<div class="t" style="top:1045.27px;font-size:15px;line-height:21.0px;height:21.0px;color:#383736;left:451.77px;">ADHD</div>
<div class="t" style="top:1045.27px;font-size:15px;line-height:21.0px;height:21.0px;color:#383736;left:754.66px;">17-1-2020 09:00</div>
<div class="t" style="top:1045.27px;font-size:15px;line-height:21.0px;height:21.0px;color:#383736;letter-spacing:0.15px;left:905.55px;">8-7-2020</div>
<div class="t" style="top:1045.27px;font-size:15px;line-height:21.0px;height:21.0px;color:#383736;left:591.35px;width:600px;text-align:right;">2</div>
<div class="t" style="top:1045.27px;font-size:15px;line-height:21.0px;height:21.0px;color:#383736;left:742.66px;width:600px;text-align:right;">3</div>
<div style="position:absolute;left:268px;top:1075.0px;width:1098.5px;height:1px;background:#edebe9;"></div>
<div class="t" style="top:1085.87px;font-size:15px;line-height:21.0px;height:21.0px;color:#383736;letter-spacing:-0.3px;left:-166.54px;width:600px;text-align:right;">16.223</div>
<div class="t" style="top:1085.87px;font-size:15px;line-height:21.0px;height:21.0px;color:#383736;left:450.64px;">Uitgiftegesprekken</div>
<div class="t" style="top:1085.87px;font-size:15px;line-height:21.0px;height:21.0px;color:#383736;left:755.05px;">29-6-2020 18:00</div>
<div class="t" style="top:1085.87px;font-size:15px;line-height:21.0px;height:21.0px;color:#383736;letter-spacing:0.15px;left:905.43px;">7-7-2020</div>
<div class="t" style="top:1085.87px;font-size:15px;line-height:21.0px;height:21.0px;color:#383736;left:591.35px;width:600px;text-align:right;">12</div>
<div class="t" style="top:1085.87px;font-size:15px;line-height:21.0px;height:21.0px;color:#383736;left:742.75px;width:600px;text-align:right;">2</div>
<div style="position:absolute;left:268px;top:1115.6px;width:1098.5px;height:1px;background:#edebe9;"></div>
<div class="t" style="top:1126.47px;font-size:15px;line-height:21.0px;height:21.0px;color:#383736;letter-spacing:-0.3px;left:-166.54px;width:600px;text-align:right;">16.306</div>
<div class="t" style="top:1126.47px;font-size:15px;line-height:21.0px;height:21.0px;color:#383736;left:450.57px;">Psychische aandoeningen en therapietro…</div>
<div class="t" style="top:1126.47px;font-size:15px;line-height:21.0px;height:21.0px;color:#383736;left:755.04px;">6-7-2020 18:30</div>
<div class="t" style="top:1126.47px;font-size:15px;line-height:21.0px;height:21.0px;color:#383736;letter-spacing:0.15px;left:905.43px;">7-7-2020</div>
<div class="t" style="top:1126.47px;font-size:15px;line-height:21.0px;height:21.0px;color:#383736;left:591.04px;width:600px;text-align:right;">14</div>
<div class="t" style="top:1126.47px;font-size:15px;line-height:21.0px;height:21.0px;color:#383736;left:742.63px;width:600px;text-align:right;">5</div>
<div style="position:absolute;left:268px;top:1156.2px;width:1098.5px;height:1px;background:#edebe9;"></div>
<div class="t" style="top:1167.07px;font-size:15px;line-height:21.0px;height:21.0px;color:#383736;letter-spacing:-0.3px;left:-166.76px;width:600px;text-align:right;">16.114</div>
<div class="t" style="top:1167.07px;font-size:15px;line-height:21.0px;height:21.0px;color:#383736;left:451.04px;">Cliënten met kanker</div>
<div class="t" style="top:1167.07px;font-size:15px;line-height:21.0px;height:21.0px;color:#383736;left:754.66px;">1-7-2020 18:30</div>
<div class="t" style="top:1167.07px;font-size:15px;line-height:21.0px;height:21.0px;color:#383736;letter-spacing:0.15px;left:905.63px;">3-7-2020</div>
<div class="t" style="top:1167.07px;font-size:15px;line-height:21.0px;height:21.0px;color:#383736;left:591.35px;width:600px;text-align:right;">12</div>
<div class="t" style="top:1167.07px;font-size:15px;line-height:21.0px;height:21.0px;color:#383736;left:742.75px;width:600px;text-align:right;">7</div>
<div style="position:absolute;left:268px;top:1196.8px;width:1098.5px;height:1px;background:#edebe9;"></div>
<div class="t" style="top:1207.67px;font-size:15px;line-height:21.0px;height:21.0px;color:#383736;letter-spacing:-0.3px;left:-166.61px;width:600px;text-align:right;">16.180</div>
<div class="t" style="top:1207.67px;font-size:15px;line-height:21.0px;height:21.0px;color:#383736;left:450.64px;">Uitgiftegesprekken</div>
<div class="t" style="top:1207.67px;font-size:15px;line-height:21.0px;height:21.0px;color:#383736;left:755.23px;">30-6-2020 18:30</div>
<div class="t" style="top:1207.67px;font-size:15px;line-height:21.0px;height:21.0px;color:#383736;letter-spacing:0.15px;left:905.06px;">1-7-2020</div>
<div class="t" style="top:1207.67px;font-size:15px;line-height:21.0px;height:21.0px;color:#383736;left:591.19px;width:600px;text-align:right;">10</div>
<div class="t" style="top:1207.67px;font-size:15px;line-height:21.0px;height:21.0px;color:#383736;left:742.66px;width:600px;text-align:right;">3</div>
<div style="position:absolute;left:268px;top:1237.4px;width:1098.5px;height:1px;background:#edebe9;"></div>
<div class="t" style="top:1248.27px;font-size:15px;line-height:21.0px;height:21.0px;color:#383736;letter-spacing:-0.3px;left:-166.55px;width:600px;text-align:right;">16.368</div>
<div class="t" style="top:1248.27px;font-size:15px;line-height:21.0px;height:21.0px;color:#383736;left:450.57px;">Dementie</div>
<div class="t" style="top:1248.27px;font-size:15px;line-height:21.0px;height:21.0px;color:#383736;left:755.23px;">30-6-2020 18:30</div>
<div class="t" style="top:1248.27px;font-size:15px;line-height:21.0px;height:21.0px;color:#383736;letter-spacing:0.15px;left:905.06px;">1-7-2020</div>
<div class="t" style="top:1248.27px;font-size:15px;line-height:21.0px;height:21.0px;color:#383736;left:591.19px;width:600px;text-align:right;">10</div>
<div class="t" style="top:1248.27px;font-size:15px;line-height:21.0px;height:21.0px;color:#383736;left:742.66px;width:600px;text-align:right;">6</div>
<div style="position:absolute;left:268px;top:1278.0px;width:1098.5px;height:1px;background:#edebe9;"></div>
<div class="t" style="top:1288.87px;font-size:15px;line-height:21.0px;height:21.0px;color:#383736;letter-spacing:-0.3px;left:-166.57px;width:600px;text-align:right;">16.225</div>
<div class="t" style="top:1288.87px;font-size:15px;line-height:21.0px;height:21.0px;color:#383736;left:450.64px;">Uitgiftegesprekken</div>
<div class="t" style="top:1288.87px;font-size:15px;line-height:21.0px;height:21.0px;color:#383736;left:755.05px;">25-6-2020 18:30</div>
<div class="t" style="top:1288.87px;font-size:15px;line-height:21.0px;height:21.0px;color:#383736;letter-spacing:0.15px;left:905.45px;">29-6-2020</div>
<div class="t" style="top:1288.87px;font-size:15px;line-height:21.0px;height:21.0px;color:#383736;left:591.26px;width:600px;text-align:right;">13</div>
<div class="t" style="top:1288.87px;font-size:15px;line-height:21.0px;height:21.0px;color:#383736;left:742.59px;width:600px;text-align:right;">0</div>
<div style="position:absolute;left:268px;top:1318.6px;width:1098.5px;height:1px;background:#edebe9;"></div>
<div style="position:absolute;left:1397px;top:909px;width:1148px;height:500px;background:#fff;border-radius:3px;box-shadow:0 0 1.5px rgba(0,0,0,0.13),0 1px 2px rgba(0,0,0,0.10);"></div>
<div class="t" style="top:922.56px;font-size:14px;line-height:19.6px;height:19.6px;color:#383736;letter-spacing:0.12px;left:1411.09px;-webkit-text-stroke:0.35px #323130;">Cursussen</div>
<div style="position:absolute;left:1411.5px;top:951.5px;width:1118.5px;height:1px;background:#d6d4d2;"></div>
<svg style="position:absolute;left:2174px;top:922.5px;overflow:visible;" width="16" height="16" viewBox="0 0 16 16" fill="none"><path d="M8 1 V15 M1 8 H15" stroke="#444" stroke-width="1.15"/></svg>
<div class="t" style="top:921.16px;font-size:14px;line-height:19.6px;height:19.6px;color:#383736;letter-spacing:-0.3px;left:2204.85px;">New</div>
<svg style="position:absolute;left:2262.5px;top:922.5px;overflow:visible;" width="13" height="16" viewBox="0 0 13 16" fill="none"><path d="M0.8 3.4 H11.8 M4.4 3.2 V1.2 H8.4 V3.2 M2.1 3.4 L2.6 15 H10 L10.5 3.4" stroke="#444" stroke-width="1.1"/><rect x="3.9" y="5.2" width="4.8" height="8" fill="#bdbdbd"/><path d="M4.9 5.4 V13 M7.6 5.4 V13" stroke="#444" stroke-width="1"/></svg>
<div class="t" style="top:921.16px;font-size:14px;line-height:19.6px;height:19.6px;color:#383736;letter-spacing:0.05px;left:2292.45px;">Delete</div>
<div style="position:absolute;left:2347.2px;top:920.2px;width:1px;height:20.6px;background:#b8b6b4;"></div>
<svg style="position:absolute;left:2355px;top:925.5px;overflow:visible;" width="15" height="9" viewBox="0 0 15 9" fill="none"><path d="M0.8 1.2 L7.2 7.6 L13.6 1.2" stroke="#444" stroke-width="1.1"/></svg>
<svg style="position:absolute;left:2396.5px;top:922.5px;overflow:visible;" width="16" height="16" viewBox="0 0 16 16" fill="none"><path d="M4.6 2.2 A6.9 6.9 0 1 0 8.4 1.2" stroke="#444" stroke-width="1.1"/><path d="M5.2 -0.4 L4.6 2.2 L7.4 3" stroke="#444" stroke-width="1.1"/></svg>
<div class="t" style="top:921.16px;font-size:14px;line-height:19.6px;height:19.6px;color:#383736;letter-spacing:-0.5px;left:2427.45px;">Refresh</div>
<svg style="position:absolute;left:2507px;top:923.5px;overflow:visible;" width="4" height="14" viewBox="0 0 4 14" fill="none"><circle cx="2" cy="1.4" r="1.1" fill="#444"/><circle cx="2" cy="7" r="1.1" fill="#444"/><circle cx="2" cy="12.6" r="1.1" fill="#444"/></svg>
<div style="position:absolute;left:2320.3px;top:959.2px;width:207.5px;height:32.5px;border:1.4px solid #d6d6d6;background:#fff;"></div>
<div class="t" style="top:968.76px;font-size:14px;line-height:19.6px;height:19.6px;color:#6e6e6e;letter-spacing:-0.2px;left:2327.16px;">Search this view</div>
<svg style="position:absolute;left:2504px;top:969.0px;overflow:visible;" width="16" height="16" viewBox="0 0 16 16" fill="none"><circle cx="10.2" cy="6" r="4.6" stroke="#222" stroke-width="1.3"/><path d="M7 9.2 L1.4 14.8" stroke="#222" stroke-width="1.4"/></svg>
<svg style="position:absolute;left:1440.5px;top:1009.5px;overflow:visible;" width="13" height="11" viewBox="0 0 13 11" fill="none"><path d="M1 5.6 L4.6 9.4 L12 1.4" stroke="#111" stroke-width="1.8"/></svg>
<div style="position:absolute;left:1456.2px;top:1004.5px;width:1px;height:20.3px;background:#cfcfcf;"></div>
<div class="t" style="top:1007.19px;font-size:12.5px;line-height:17.5px;height:17.5px;color:#6b6b6b;letter-spacing:-0.45px;left:1463.25px;">Inschrij...</div>
<svg style="position:absolute;left:1519.7px;top:1007.2px;overflow:visible;" width="8" height="13" viewBox="0 0 8 13" fill="none"><path d="M4 0.4 V12 M0.8 8.6 L4 12 L7.2 8.6" stroke="#6b6b6b" stroke-width="1.05"/></svg>
<svg style="position:absolute;left:1540.3px;top:1010.9px;overflow:visible;" width="12" height="7.5" viewBox="0 0 12 7.5" fill="none"><path d="M0.6 0.8 L6 6.4 L11.4 0.8" stroke="#6b6b6b" stroke-width="1.05"/></svg>
<div style="position:absolute;left:1557px;top:1004.5px;width:1px;height:20.3px;background:#cfcfcf;"></div>
<div class="t" style="top:1007.19px;font-size:12.5px;line-height:17.5px;height:17.5px;color:#6b6b6b;letter-spacing:-0.45px;left:1564.17px;">Evenement...</div>
<svg style="position:absolute;left:1641.1000000000001px;top:1010.9px;overflow:visible;" width="12" height="7.5" viewBox="0 0 12 7.5" fill="none"><path d="M0.6 0.8 L6 6.4 L11.4 0.8" stroke="#6b6b6b" stroke-width="1.05"/></svg>
<div style="position:absolute;left:1657.3px;top:1004.5px;width:1px;height:20.3px;background:#cfcfcf;"></div>
<div class="t" style="top:1007.19px;font-size:12.5px;line-height:17.5px;height:17.5px;color:#6b6b6b;letter-spacing:-0.45px;left:1664.67px;">Cursus (Cursusevene...</div>
<svg style="position:absolute;left:1792.2px;top:1010.9px;overflow:visible;" width="12" height="7.5" viewBox="0 0 12 7.5" fill="none"><path d="M0.6 0.8 L6 6.4 L11.4 0.8" stroke="#6b6b6b" stroke-width="1.05"/></svg>
<div style="position:absolute;left:1808.3px;top:1004.5px;width:1px;height:20.3px;background:#cfcfcf;"></div>
<div class="t" style="top:1007.19px;font-size:12.5px;line-height:17.5px;height:17.5px;color:#6b6b6b;letter-spacing:-0.45px;left:1815.37px;">Coördinato...</div>
<svg style="position:absolute;left:1891.7px;top:1010.9px;overflow:visible;" width="12" height="7.5" viewBox="0 0 12 7.5" fill="none"><path d="M0.6 0.8 L6 6.4 L11.4 0.8" stroke="#6b6b6b" stroke-width="1.05"/></svg>
<div style="position:absolute;left:1909px;top:1004.5px;width:1px;height:20.3px;background:#cfcfcf;"></div>
<div class="t" style="top:1007.19px;font-size:12.5px;line-height:17.5px;height:17.5px;color:#6b6b6b;letter-spacing:-0.45px;left:1916.75px;">Webshop A...</div>
<svg style="position:absolute;left:1992.7px;top:1010.9px;overflow:visible;" width="12" height="7.5" viewBox="0 0 12 7.5" fill="none"><path d="M0.6 0.8 L6 6.4 L11.4 0.8" stroke="#6b6b6b" stroke-width="1.05"/></svg>
<div style="position:absolute;left:2009.3px;top:1004.5px;width:1px;height:20.3px;background:#cfcfcf;"></div>
<div class="t" style="top:1007.19px;font-size:12.5px;line-height:17.5px;height:17.5px;color:#6b6b6b;letter-spacing:-0.45px;left:2016.95px;">Webshop ...</div>
<svg style="position:absolute;left:2093.2999999999997px;top:1010.9px;overflow:visible;" width="12" height="7.5" viewBox="0 0 12 7.5" fill="none"><path d="M0.6 0.8 L6 6.4 L11.4 0.8" stroke="#6b6b6b" stroke-width="1.05"/></svg>
<div style="position:absolute;left:2109.8px;top:1004.5px;width:1px;height:20.3px;background:#cfcfcf;"></div>
<div class="t" style="top:1007.19px;font-size:12.5px;line-height:17.5px;height:17.5px;color:#6b6b6b;letter-spacing:-0.45px;left:2117.45px;">Webshop ...</div>
<svg style="position:absolute;left:2193.5px;top:1010.9px;overflow:visible;" width="12" height="7.5" viewBox="0 0 12 7.5" fill="none"><path d="M0.6 0.8 L6 6.4 L11.4 0.8" stroke="#6b6b6b" stroke-width="1.05"/></svg>
<div style="position:absolute;left:2210.4px;top:1004.5px;width:1px;height:20.3px;background:#cfcfcf;"></div>
<div class="t" style="top:1007.19px;font-size:12.5px;line-height:17.5px;height:17.5px;color:#6b6b6b;letter-spacing:-0.45px;left:2217.43px;">Startdatum...</div>
<svg style="position:absolute;left:2294.7px;top:1010.9px;overflow:visible;" width="12" height="7.5" viewBox="0 0 12 7.5" fill="none"><path d="M0.6 0.8 L6 6.4 L11.4 0.8" stroke="#6b6b6b" stroke-width="1.05"/></svg>
<div style="position:absolute;left:2310.6px;top:1004.5px;width:1px;height:20.3px;background:#cfcfcf;"></div>
<div class="t" style="top:1007.19px;font-size:12.5px;line-height:17.5px;height:17.5px;color:#6b6b6b;letter-spacing:-0.45px;left:2317.87px;">Locatie cursusevene...</div>
<svg style="position:absolute;left:2445.2px;top:1010.9px;overflow:visible;" width="12" height="7.5" viewBox="0 0 12 7.5" fill="none"><path d="M0.6 0.8 L6 6.4 L11.4 0.8" stroke="#6b6b6b" stroke-width="1.05"/></svg>
<div style="position:absolute;left:2462.2px;top:1004.5px;width:1px;height:20.3px;background:#cfcfcf;"></div>
<div class="t" style="top:1007.19px;font-size:12.5px;line-height:17.5px;height:17.5px;color:#6b6b6b;letter-spacing:-0.45px;left:2468.87px;width:62.03px;overflow:hidden;">Plaatsnaam</div>
<div style="position:absolute;left:1411.5px;top:1034.0px;width:1119px;height:2px;background:#e1dfdd;"></div>
<div class="t" style="top:1045.27px;font-size:15px;line-height:21.0px;height:21.0px;color:#383736;letter-spacing:-0.1px;left:1463.95px;">8-7-2020 …</div>
<div class="t" style="top:1045.27px;font-size:15px;line-height:21.0px;height:21.0px;color:#383736;letter-spacing:-0.3px;left:1047.55px;width:600px;text-align:right;">15.918</div>
<div class="t" style="top:1047.26px;font-size:14px;line-height:19.6px;height:19.6px;color:#3470a6;left:1664.35px;">Leerlingbegeleiding</div>
<div class="blur" style="position:absolute;left:1815px;top:1051.5px;width:41px;height:11px;background:#7fa8d0;opacity:0.36;border-radius:4px;"></div>
<div class="blur" style="position:absolute;left:1864px;top:1051.5px;width:42px;height:11px;background:#7fa8d0;opacity:0.36;border-radius:4px;"></div>
<div class="blur" style="position:absolute;left:1918px;top:1051.5px;width:63px;height:11px;background:#8a8a8a;opacity:0.32;border-radius:4px;"></div>
<div class="blur" style="position:absolute;left:2018px;top:1051.5px;width:69px;height:11px;background:#8a8a8a;opacity:0.32;border-radius:4px;"></div>
<div class="blur" style="position:absolute;left:2118px;top:1051.5px;width:55px;height:11px;background:#8a8a8a;opacity:0.32;border-radius:4px;"></div>
<div class="blur" style="position:absolute;left:2217px;top:1051.5px;width:21px;height:11px;background:#8a8a8a;opacity:0.32;border-radius:4px;"></div>
<div class="blur" style="position:absolute;left:2244px;top:1051.5px;width:18px;height:11px;background:#8a8a8a;opacity:0.32;border-radius:4px;"></div>
<div class="blur" style="position:absolute;left:2268px;top:1051.5px;width:21px;height:11px;background:#8a8a8a;opacity:0.32;border-radius:4px;"></div>
<div class="blur" style="position:absolute;left:2317px;top:1051.5px;width:39px;height:11px;background:#7fa8d0;opacity:0.36;border-radius:4px;"></div>
<div class="blur" style="position:absolute;left:2362px;top:1051.5px;width:45px;height:11px;background:#7fa8d0;opacity:0.36;border-radius:4px;"></div>
<div class="t" style="top:1045.27px;font-size:15px;line-height:21.0px;height:21.0px;color:#383736;letter-spacing:-0.7px;left:2469.04px;width:62.66px;overflow:hidden;">UTRECHT</div>
<div style="position:absolute;left:1431.5px;top:1075.0px;width:1099.5px;height:1px;background:#edebe9;"></div>
</body></html>
